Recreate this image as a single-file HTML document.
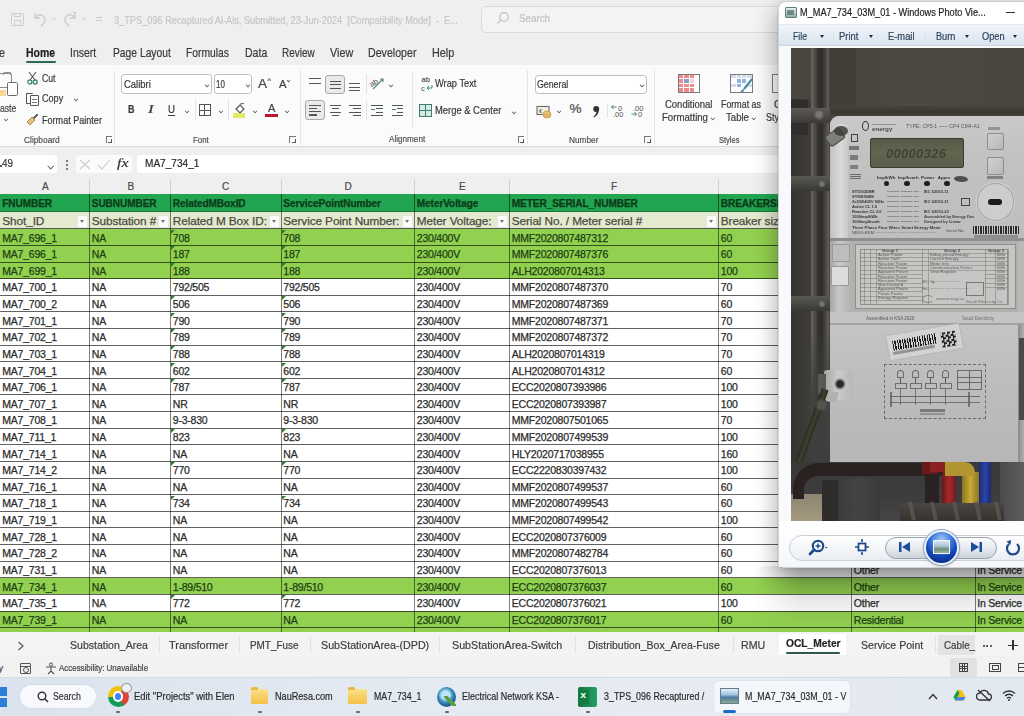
<!DOCTYPE html><html><head><meta charset="utf-8"><style>*{margin:0;padding:0;box-sizing:border-box}html,body{width:1024px;height:716px;overflow:hidden;background:#efefef;font-family:"Liberation Sans",sans-serif;position:relative}</style></head><body><div style="position:absolute;left:0.00px;top:0.00px;width:1024.00px;height:65.00px;background:#efefef"></div><div style="position:absolute;left:11.00px;top:13.00px;width:13.00px;height:13.00px;border:1.3px solid #cdcdcd;border-radius:1.5px"></div><div style="position:absolute;left:14.00px;top:13.00px;width:7.00px;height:4.00px;border:1.2px solid #cdcdcd;border-top:none"></div><div style="position:absolute;left:14.00px;top:20.00px;width:7.00px;height:6.00px;border:1.2px solid #cdcdcd;border-bottom:none"></div><svg style="position:absolute;left:32px;top:11px" width="16" height="16" viewBox="0 0 16 16"><path d="M3 2v5h5M3.5 6.5C5 4 8 3 10.5 4.5S14 9 12 12l-3 3" fill="none" stroke="#cbcbcb" stroke-width="1.4"/></svg><div style="position:absolute;left:51.5px;top:16.0px;width:3.5px;height:3.5px;border-right:1.2px solid #cfcfcf;border-bottom:1.2px solid #cfcfcf;transform:rotate(45deg) scale(0.8);transform-origin:50% 50%"></div><svg style="position:absolute;left:62px;top:11px" width="16" height="16" viewBox="0 0 16 16"><path d="M13 2v5H8M12.5 6.5C11 4 8 3 5.5 4.5S2 9 4 12l3 3" fill="none" stroke="#cbcbcb" stroke-width="1.4"/><path d="M11 1l3 1" stroke="#cbcbcb"/></svg><div style="position:absolute;left:81.5px;top:16.0px;width:3.5px;height:3.5px;border-right:1.2px solid #cfcfcf;border-bottom:1.2px solid #cfcfcf;transform:rotate(45deg) scale(0.8);transform-origin:50% 50%"></div><div style="position:absolute;left:96.00px;top:17.00px;width:6.00px;height:1.20px;background:#cbcbcb"></div><div style="position:absolute;left:96.00px;top:20.00px;width:6.00px;height:1.20px;background:#cbcbcb"></div><div style="position:absolute;left:114.20px;top:14.80px;font-family:'Liberation Sans',sans-serif;font-size:10.60px;line-height:1;white-space:nowrap;color:#c6c6c6;-webkit-text-stroke:0.2px currentColor;transform:scaleX(0.869);transform-origin:0 0;">3_TPS_096 Recaptured Al-Ais, Submitted, 23-Jun-2024 &nbsp;[Compatibility Mode] &nbsp;- &nbsp;E...</div><div style="position:absolute;left:480.50px;top:6.00px;width:309.50px;height:27.00px;background:#f3f3f3;border:1px solid #dadada;border-radius:5px"></div><svg style="position:absolute;left:496px;top:11px" width="14" height="14" viewBox="0 0 14 14"><circle cx="8" cy="6" r="4.3" fill="none" stroke="#c4c4c4" stroke-width="1.3"/><path d="M5 9L1.5 12.5" stroke="#c4c4c4" stroke-width="1.4"/></svg><div style="position:absolute;left:519.00px;top:13.24px;font-family:'Liberation Sans',sans-serif;font-size:11.00px;line-height:1;white-space:nowrap;color:#c0c0c0;-webkit-text-stroke:0.2px currentColor;transform:scaleX(0.889);transform-origin:0 0;">Search</div><div style="position:absolute;left:-1.00px;top:47.05px;font-family:'Liberation Sans',sans-serif;font-size:12.20px;line-height:1;white-space:nowrap;color:#3a3a3a;-webkit-text-stroke:0.2px currentColor;transform:scaleX(0.884);transform-origin:0 0;">e</div><div style="position:absolute;left:26.20px;top:47.05px;font-family:'Liberation Sans',sans-serif;font-size:12.20px;line-height:1;white-space:nowrap;color:#1f1f1f;-webkit-text-stroke:0.2px currentColor;font-weight:bold;transform:scaleX(0.859);transform-origin:0 0;">Home</div><div style="position:absolute;left:69.80px;top:47.05px;font-family:'Liberation Sans',sans-serif;font-size:12.20px;line-height:1;white-space:nowrap;color:#3a3a3a;-webkit-text-stroke:0.2px currentColor;transform:scaleX(0.859);transform-origin:0 0;">Insert</div><div style="position:absolute;left:112.50px;top:47.05px;font-family:'Liberation Sans',sans-serif;font-size:12.20px;line-height:1;white-space:nowrap;color:#3a3a3a;-webkit-text-stroke:0.2px currentColor;transform:scaleX(0.845);transform-origin:0 0;">Page Layout</div><div style="position:absolute;left:186.30px;top:47.05px;font-family:'Liberation Sans',sans-serif;font-size:12.20px;line-height:1;white-space:nowrap;color:#3a3a3a;-webkit-text-stroke:0.2px currentColor;transform:scaleX(0.844);transform-origin:0 0;">Formulas</div><div style="position:absolute;left:244.50px;top:47.05px;font-family:'Liberation Sans',sans-serif;font-size:12.20px;line-height:1;white-space:nowrap;color:#3a3a3a;-webkit-text-stroke:0.2px currentColor;transform:scaleX(0.865);transform-origin:0 0;">Data</div><div style="position:absolute;left:282.00px;top:47.05px;font-family:'Liberation Sans',sans-serif;font-size:12.20px;line-height:1;white-space:nowrap;color:#3a3a3a;-webkit-text-stroke:0.2px currentColor;transform:scaleX(0.820);transform-origin:0 0;">Review</div><div style="position:absolute;left:330.30px;top:47.05px;font-family:'Liberation Sans',sans-serif;font-size:12.20px;line-height:1;white-space:nowrap;color:#3a3a3a;-webkit-text-stroke:0.2px currentColor;transform:scaleX(0.885);transform-origin:0 0;">View</div><div style="position:absolute;left:368.30px;top:47.05px;font-family:'Liberation Sans',sans-serif;font-size:12.20px;line-height:1;white-space:nowrap;color:#3a3a3a;-webkit-text-stroke:0.2px currentColor;transform:scaleX(0.872);transform-origin:0 0;">Developer</div><div style="position:absolute;left:432.00px;top:47.05px;font-family:'Liberation Sans',sans-serif;font-size:12.20px;line-height:1;white-space:nowrap;color:#3a3a3a;-webkit-text-stroke:0.2px currentColor;transform:scaleX(0.889);transform-origin:0 0;">Help</div><div style="position:absolute;left:26.00px;top:61.30px;width:30.00px;height:2.20px;background:#2b6b52;border-radius:1px"></div><div style="position:absolute;left:0.00px;top:65.00px;width:1024.00px;height:82.00px;background:#fbfbfb;border-bottom:1px solid #d9d9d9;box-shadow:0 1px 1px rgba(0,0,0,0.05)"></div><div style="position:absolute;left:114.40px;top:70.00px;width:1.00px;height:75.00px;background:#e6e6e6"></div><div style="position:absolute;left:299.50px;top:70.00px;width:1.00px;height:75.00px;background:#e6e6e6"></div><div style="position:absolute;left:526.80px;top:70.00px;width:1.00px;height:75.00px;background:#e6e6e6"></div><div style="position:absolute;left:653.50px;top:70.00px;width:1.00px;height:75.00px;background:#e6e6e6"></div><div style="position:absolute;left:-3.00px;top:73.00px;width:15.00px;height:15.00px;border:1.2px solid #8a8a8a;border-radius:2px;border-left:none"></div><div style="position:absolute;left:0.00px;top:90.00px;width:6.00px;height:6.00px;background:#f2d27a;opacity:.8"></div><div style="position:absolute;left:6.50px;top:82.00px;width:11.10px;height:14.30px;background:#fff;border:1.4px solid #6a6a6a;border-radius:1.5px"></div><div style="position:absolute;left:3.00px;top:72.00px;width:8.00px;height:3.00px;border:1.2px solid #8a8a8a;border-bottom:none;border-radius:2px 2px 0 0"></div><div style="position:absolute;left:-0.50px;top:102.82px;font-family:'Liberation Sans',sans-serif;font-size:10.50px;line-height:1;white-space:nowrap;color:#444;-webkit-text-stroke:0.2px currentColor;transform:scaleX(0.821);transform-origin:0 0;">aste</div><div style="position:absolute;left:3.5px;top:117.0px;width:4px;height:4px;border-right:1.2px solid #555;border-bottom:1.2px solid #555;transform:rotate(45deg) scale(0.8);transform-origin:50% 50%"></div><svg style="position:absolute;left:27px;top:71px" width="11" height="14" viewBox="0 0 11 14"><path d="M2 1l6 8M9 1L3 9" stroke="#555" stroke-width="1.1" fill="none"/><circle cx="2.8" cy="11" r="2" fill="none" stroke="#3d8a78" stroke-width="1.3"/><circle cx="8.2" cy="11" r="2" fill="none" stroke="#3d8a78" stroke-width="1.3"/></svg><div style="position:absolute;left:41.60px;top:73.70px;font-family:'Liberation Sans',sans-serif;font-size:10.00px;line-height:1;white-space:nowrap;color:#3a3a3a;-webkit-text-stroke:0.2px currentColor;transform:scaleX(0.868);transform-origin:0 0;">Cut</div><div style="position:absolute;left:26.00px;top:92.50px;width:7.00px;height:11.50px;border:1.2px solid #555;border-radius:1px;border-right:none"></div><div style="position:absolute;left:30.00px;top:95.00px;width:8.50px;height:10.50px;background:#fbfbfb;border:1.2px solid #555;border-radius:1px"></div><div style="position:absolute;left:32.00px;top:99.00px;width:4.50px;height:1.00px;background:#777"></div><div style="position:absolute;left:32.00px;top:101.50px;width:4.50px;height:1.00px;background:#777"></div><div style="position:absolute;left:41.60px;top:94.40px;font-family:'Liberation Sans',sans-serif;font-size:10.00px;line-height:1;white-space:nowrap;color:#3a3a3a;-webkit-text-stroke:0.2px currentColor;transform:scaleX(0.908);transform-origin:0 0;">Copy</div><div style="position:absolute;left:73.5px;top:97.0px;width:4px;height:4px;border-right:1.2px solid #555;border-bottom:1.2px solid #555;transform:rotate(45deg) scale(0.8);transform-origin:50% 50%"></div><svg style="position:absolute;left:26px;top:113px" width="13" height="13" viewBox="0 0 13 13"><path d="M1 9l5-5 3 3-5 5z" fill="#e9c27a" stroke="#9a7a4a" stroke-width="0.8"/><path d="M7 5l4-4 1 1-4 4" fill="#666" stroke="#555" stroke-width="0.8"/></svg><div style="position:absolute;left:41.60px;top:116.00px;font-family:'Liberation Sans',sans-serif;font-size:10.00px;line-height:1;white-space:nowrap;color:#3a3a3a;-webkit-text-stroke:0.2px currentColor;transform:scaleX(0.906);transform-origin:0 0;">Format Painter</div><div style="position:absolute;left:24.00px;top:134.50px;font-family:'Liberation Sans',sans-serif;font-size:9.40px;line-height:1;white-space:nowrap;color:#505050;-webkit-text-stroke:0.2px currentColor;transform:scaleX(0.890);transform-origin:0 0;">Clipboard</div><div style="position:absolute;left:105.60px;top:136.00px;width:6.50px;height:6.50px;border-left:1px solid #777;border-top:1px solid #777"></div><div style="position:absolute;left:108.1px;top:138.5px;width:4px;height:4px;border-right:1.2px solid #555;border-bottom:1.2px solid #555"></div><div style="position:absolute;left:121.30px;top:74.20px;width:90.30px;height:19.50px;background:#fff;border:1px solid #bdbdbd;border-radius:3.5px"></div><div style="position:absolute;left:123.50px;top:79.57px;font-family:'Liberation Sans',sans-serif;font-size:10.20px;line-height:1;white-space:nowrap;color:#3a3a3a;-webkit-text-stroke:0.2px currentColor;transform:scaleX(0.931);transform-origin:0 0;">Calibri</div><div style="position:absolute;left:204.5px;top:82.5px;width:4px;height:4px;border-right:1.2px solid #444;border-bottom:1.2px solid #444;transform:rotate(45deg) scale(0.8);transform-origin:50% 50%"></div><div style="position:absolute;left:214.00px;top:74.20px;width:38.00px;height:19.50px;background:#fff;border:1px solid #bdbdbd;border-radius:3.5px"></div><div style="position:absolute;left:216.30px;top:79.57px;font-family:'Liberation Sans',sans-serif;font-size:10.20px;line-height:1;white-space:nowrap;color:#3a3a3a;-webkit-text-stroke:0.2px currentColor;transform:scaleX(0.784);transform-origin:0 0;">10</div><div style="position:absolute;left:246.0px;top:82.5px;width:4px;height:4px;border-right:1.2px solid #444;border-bottom:1.2px solid #444;transform:rotate(45deg) scale(0.8);transform-origin:50% 50%"></div><div style="position:absolute;left:257.70px;top:76.92px;font-family:'Liberation Sans',sans-serif;font-size:13.00px;line-height:1;white-space:nowrap;color:#444;-webkit-text-stroke:0.2px currentColor;transform:scaleX(1.038);transform-origin:0 0;">A</div><div style="position:absolute;left:267.50px;top:77.38px;font-family:'Liberation Sans',sans-serif;font-size:7.00px;line-height:1;white-space:nowrap;color:#444;-webkit-text-stroke:0.2px currentColor;">^</div><div style="position:absolute;left:279.00px;top:79.24px;font-family:'Liberation Sans',sans-serif;font-size:11.00px;line-height:1;white-space:nowrap;color:#444;-webkit-text-stroke:0.2px currentColor;transform:scaleX(1.022);transform-origin:0 0;">A</div><div style="position:absolute;left:286.5px;top:79.0px;width:3px;height:3px;border-right:1.2px solid #444;border-bottom:1.2px solid #444;transform:rotate(45deg) scale(0.8);transform-origin:50% 50%"></div><div style="position:absolute;left:127.80px;top:104.16px;font-family:'Liberation Sans',sans-serif;font-size:11.50px;line-height:1;white-space:nowrap;color:#3a3a3a;-webkit-text-stroke:0.2px currentColor;font-weight:bold;transform:scaleX(0.783);transform-origin:0 0;">B</div><div style="position:absolute;left:148.20px;top:104.16px;font-family:'Liberation Serif',serif;font-size:11.50px;line-height:1;white-space:nowrap;color:#3a3a3a;-webkit-text-stroke:0.2px currentColor;font-style:italic;transform:scaleX(1.462);transform-origin:0 0;">I</div><div style="position:absolute;left:167.70px;top:104.16px;font-family:'Liberation Sans',sans-serif;font-size:11.50px;line-height:1;white-space:nowrap;color:#3a3a3a;-webkit-text-stroke:0.2px currentColor;transform:scaleX(0.843);transform-origin:0 0;">U</div><div style="position:absolute;left:167.50px;top:115.00px;width:7.50px;height:1.00px;background:#444"></div><div style="position:absolute;left:184.5px;top:109.0px;width:4px;height:4px;border-right:1.2px solid #555;border-bottom:1.2px solid #555;transform:rotate(45deg) scale(0.8);transform-origin:50% 50%"></div><div style="position:absolute;left:194.60px;top:100.00px;width:1.00px;height:20.00px;background:#e2e2e2"></div><div style="position:absolute;left:199.20px;top:104.00px;width:11.50px;height:12.00px;border:1.2px solid #555;background:linear-gradient(#555,#555) 50% 0/1px 100% no-repeat,linear-gradient(#555,#555) 0 50%/100% 1px no-repeat"></div><div style="position:absolute;left:218.5px;top:109.0px;width:4px;height:4px;border-right:1.2px solid #555;border-bottom:1.2px solid #555;transform:rotate(45deg) scale(0.8);transform-origin:50% 50%"></div><div style="position:absolute;left:228.00px;top:100.00px;width:1.00px;height:20.00px;background:#e2e2e2"></div><svg style="position:absolute;left:234px;top:103px" width="12" height="11" viewBox="0 0 12 11"><path d="M2 6l4-4 4 4-4 4z" fill="none" stroke="#555" stroke-width="1.2"/><path d="M6 1l4-0.5" stroke="#555" stroke-width="1"/></svg><div style="position:absolute;left:232.60px;top:113.20px;width:12.10px;height:4.60px;background:#dfe96a"></div><div style="position:absolute;left:252.5px;top:109.0px;width:4px;height:4px;border-right:1.2px solid #555;border-bottom:1.2px solid #555;transform:rotate(45deg) scale(0.8);transform-origin:50% 50%"></div><div style="position:absolute;left:267.90px;top:103.27px;font-family:'Liberation Sans',sans-serif;font-size:10.80px;line-height:1;white-space:nowrap;color:#444;-webkit-text-stroke:0.2px currentColor;transform:scaleX(1.027);transform-origin:0 0;">A</div><div style="position:absolute;left:265.00px;top:114.10px;width:12.70px;height:3.30px;background:#c0182a"></div><div style="position:absolute;left:285.0px;top:109.0px;width:4px;height:4px;border-right:1.2px solid #555;border-bottom:1.2px solid #555;transform:rotate(45deg) scale(0.8);transform-origin:50% 50%"></div><div style="position:absolute;left:192.70px;top:134.90px;font-family:'Liberation Sans',sans-serif;font-size:9.40px;line-height:1;white-space:nowrap;color:#505050;-webkit-text-stroke:0.2px currentColor;transform:scaleX(0.840);transform-origin:0 0;">Font</div><div style="position:absolute;left:289.20px;top:136.40px;width:6.50px;height:6.50px;border-left:1px solid #777;border-top:1px solid #777"></div><div style="position:absolute;left:291.7px;top:138.9px;width:4px;height:4px;border-right:1.2px solid #555;border-bottom:1.2px solid #555"></div><div style="position:absolute;left:308.90px;top:78.00px;width:11.70px;height:1.20px;background:#555"></div><div style="position:absolute;left:308.90px;top:83.00px;width:11.70px;height:1.20px;background:#555"></div><div style="position:absolute;left:325.30px;top:74.50px;width:19.40px;height:19.50px;background:#e9e9e9;border:1px solid #a9a9a9;border-radius:3px"></div><div style="position:absolute;left:329.50px;top:80.50px;width:11.00px;height:1.20px;background:#555"></div><div style="position:absolute;left:329.50px;top:84.00px;width:11.00px;height:1.20px;background:#555"></div><div style="position:absolute;left:329.50px;top:87.50px;width:11.00px;height:1.20px;background:#555"></div><div style="position:absolute;left:348.70px;top:83.00px;width:11.70px;height:1.20px;background:#555"></div><div style="position:absolute;left:348.70px;top:86.50px;width:11.70px;height:1.20px;background:#555"></div><div style="position:absolute;left:348.70px;top:90.00px;width:11.70px;height:1.20px;background:#555"></div><div style="position:absolute;left:366.30px;top:74.00px;width:1.00px;height:20.00px;background:#e2e2e2"></div><svg style="position:absolute;left:370px;top:76px" width="15" height="14" viewBox="0 0 15 14"><text x="0" y="9" font-size="8" font-family="Liberation Sans" fill="#555" transform="rotate(-30 5 8)">ab</text><path d="M3 13L13 3M10 3h3v3" stroke="#5a8a7a" stroke-width="1.2" fill="none"/></svg><div style="position:absolute;left:388.5px;top:83.0px;width:4px;height:4px;border-right:1.2px solid #555;border-bottom:1.2px solid #555;transform:rotate(45deg) scale(0.8);transform-origin:50% 50%"></div><div style="position:absolute;left:412.00px;top:72.00px;width:1.00px;height:56.00px;background:#e6e6e6"></div><div style="position:absolute;left:421.50px;top:76.30px;font-family:'Liberation Sans',sans-serif;font-size:7.50px;line-height:1;white-space:nowrap;color:#555;-webkit-text-stroke:0.2px currentColor;">ab</div><svg style="position:absolute;left:421px;top:84px" width="12" height="8" viewBox="0 0 12 8"><text x="0" y="7" font-size="7.5" font-family="Liberation Sans" fill="#555">c</text><path d="M11 1v3H6M8 2L6 4l2 2" stroke="#3d8a78" stroke-width="1" fill="none"/></svg><div style="position:absolute;left:435.40px;top:79.37px;font-family:'Liberation Sans',sans-serif;font-size:10.20px;line-height:1;white-space:nowrap;color:#3a3a3a;-webkit-text-stroke:0.2px currentColor;transform:scaleX(0.911);transform-origin:0 0;">Wrap Text</div><div style="position:absolute;left:305.40px;top:100.30px;width:19.20px;height:19.90px;background:#e9e9e9;border:1px solid #a9a9a9;border-radius:3px"></div><div style="position:absolute;left:309.00px;top:104.50px;width:11.50px;height:1.20px;background:#555"></div><div style="position:absolute;left:309.00px;top:107.80px;width:8.05px;height:1.20px;background:#555"></div><div style="position:absolute;left:309.00px;top:111.10px;width:11.50px;height:1.20px;background:#555"></div><div style="position:absolute;left:309.00px;top:114.40px;width:8.05px;height:1.20px;background:#555"></div><div style="position:absolute;left:330.00px;top:105.00px;width:10.50px;height:1.20px;background:#555"></div><div style="position:absolute;left:331.57px;top:108.30px;width:7.35px;height:1.20px;background:#555"></div><div style="position:absolute;left:330.00px;top:111.60px;width:10.50px;height:1.20px;background:#555"></div><div style="position:absolute;left:331.57px;top:114.90px;width:7.35px;height:1.20px;background:#555"></div><div style="position:absolute;left:349.40px;top:105.00px;width:11.80px;height:1.20px;background:#555"></div><div style="position:absolute;left:352.94px;top:108.30px;width:8.26px;height:1.20px;background:#555"></div><div style="position:absolute;left:349.40px;top:111.60px;width:11.80px;height:1.20px;background:#555"></div><div style="position:absolute;left:352.94px;top:114.90px;width:8.26px;height:1.20px;background:#555"></div><div style="position:absolute;left:366.30px;top:100.00px;width:1.00px;height:20.00px;background:#e2e2e2"></div><div style="position:absolute;left:371.00px;top:105.00px;width:12.20px;height:1.20px;background:#555"></div><div style="position:absolute;left:376.49px;top:108.30px;width:6.71px;height:1.20px;background:#555"></div><div style="position:absolute;left:376.49px;top:111.60px;width:6.71px;height:1.20px;background:#555"></div><div style="position:absolute;left:371.00px;top:114.90px;width:12.20px;height:1.20px;background:#555"></div><div style="position:absolute;left:371.00px;top:108.50px;width:4.00px;height:1.50px;background:#3d8a78"></div><div style="position:absolute;left:391.60px;top:105.00px;width:11.70px;height:1.20px;background:#555"></div><div style="position:absolute;left:396.87px;top:108.30px;width:6.44px;height:1.20px;background:#555"></div><div style="position:absolute;left:396.87px;top:111.60px;width:6.44px;height:1.20px;background:#555"></div><div style="position:absolute;left:391.60px;top:114.90px;width:11.70px;height:1.20px;background:#555"></div><div style="position:absolute;left:391.60px;top:108.50px;width:4.00px;height:1.50px;background:#3d8a78"></div><div style="position:absolute;left:419.00px;top:103.80px;width:12.90px;height:12.90px;border:1.2px solid #3d7f6e;background:#d6ebe4"></div><div style="position:absolute;left:419.00px;top:110.00px;width:13.00px;height:1.00px;background:#3d7f6e"></div><div style="position:absolute;left:425.00px;top:104.00px;width:1.00px;height:13.00px;background:#3d7f6e"></div><div style="position:absolute;left:435.40px;top:105.97px;font-family:'Liberation Sans',sans-serif;font-size:10.20px;line-height:1;white-space:nowrap;color:#3a3a3a;-webkit-text-stroke:0.2px currentColor;transform:scaleX(0.922);transform-origin:0 0;">Merge &amp; Center</div><div style="position:absolute;left:512.0px;top:110.0px;width:4px;height:4px;border-right:1.2px solid #555;border-bottom:1.2px solid #555;transform:rotate(45deg) scale(0.8);transform-origin:50% 50%"></div><div style="position:absolute;left:388.60px;top:134.20px;font-family:'Liberation Sans',sans-serif;font-size:9.40px;line-height:1;white-space:nowrap;color:#505050;-webkit-text-stroke:0.2px currentColor;transform:scaleX(0.868);transform-origin:0 0;">Alignment</div><div style="position:absolute;left:517.50px;top:136.00px;width:6.50px;height:6.50px;border-left:1px solid #777;border-top:1px solid #777"></div><div style="position:absolute;left:520.0px;top:138.5px;width:4px;height:4px;border-right:1.2px solid #555;border-bottom:1.2px solid #555"></div><div style="position:absolute;left:534.50px;top:74.50px;width:112.80px;height:19.00px;background:#fff;border:1px solid #bdbdbd;border-radius:3.5px"></div><div style="position:absolute;left:536.50px;top:79.57px;font-family:'Liberation Sans',sans-serif;font-size:10.20px;line-height:1;white-space:nowrap;color:#3a3a3a;-webkit-text-stroke:0.2px currentColor;transform:scaleX(0.863);transform-origin:0 0;">General</div><div style="position:absolute;left:639.5px;top:82.5px;width:4px;height:4px;border-right:1.2px solid #444;border-bottom:1.2px solid #444;transform:rotate(45deg) scale(0.8);transform-origin:50% 50%"></div><svg style="position:absolute;left:536px;top:105px" width="16" height="14" viewBox="0 0 16 14"><rect x="1" y="1.5" width="12" height="8" fill="#f4f0e4" stroke="#6a6a6a" stroke-width="1.1"/><text x="3" y="8" font-size="6" font-family="Liberation Sans" fill="#555">€</text><ellipse cx="11" cy="9.5" rx="4" ry="3.5" fill="#eccb7a" stroke="#b89040" stroke-width="0.8"/><path d="M8 9h6M8 11h6" stroke="#b89040" stroke-width="0.6"/></svg><div style="position:absolute;left:556.5px;top:109.0px;width:4px;height:4px;border-right:1.2px solid #555;border-bottom:1.2px solid #555;transform:rotate(45deg) scale(0.8);transform-origin:50% 50%"></div><div style="position:absolute;left:569.50px;top:102.34px;font-family:'Liberation Sans',sans-serif;font-size:13.50px;line-height:1;white-space:nowrap;color:#4a4a4a;-webkit-text-stroke:0.2px currentColor;">%</div><svg style="position:absolute;left:592px;top:105px" width="8" height="13" viewBox="0 0 8 13"><circle cx="4.2" cy="4" r="3" fill="#333"/><path d="M6.8 4.5C7 8 5 11 2 12.5L1.5 11.5C3.5 10 4.5 8 4.5 6z" fill="#333"/></svg><div style="position:absolute;left:606.50px;top:104.00px;width:1.00px;height:14.00px;background:#e2e2e2"></div><svg style="position:absolute;left:610px;top:103px" width="16" height="15" viewBox="0 0 16 15"><path d="M1.5 4h5M3.5 2L1.5 4l2 2" stroke="#4d8a78" stroke-width="1" fill="none"/><text x="8" y="7.5" font-size="7.5" font-family="Liberation Sans" fill="#555">0</text><text x="3" y="14" font-size="7.5" font-family="Liberation Sans" fill="#555">.00</text></svg><svg style="position:absolute;left:630px;top:103px" width="16" height="15" viewBox="0 0 16 15"><text x="3" y="7.5" font-size="7.5" font-family="Liberation Sans" fill="#555">.00</text><path d="M1.5 11h5M4.5 9l2 2-2 2" stroke="#4d8a78" stroke-width="1" fill="none"/><text x="8" y="14" font-size="7.5" font-family="Liberation Sans" fill="#555">0</text></svg><div style="position:absolute;left:569.00px;top:134.50px;font-family:'Liberation Sans',sans-serif;font-size:9.40px;line-height:1;white-space:nowrap;color:#505050;-webkit-text-stroke:0.2px currentColor;transform:scaleX(0.882);transform-origin:0 0;">Number</div><div style="position:absolute;left:644.00px;top:136.00px;width:6.50px;height:6.50px;border-left:1px solid #777;border-top:1px solid #777"></div><div style="position:absolute;left:646.5px;top:138.5px;width:4px;height:4px;border-right:1.2px solid #555;border-bottom:1.2px solid #555"></div><div style="position:absolute;left:677.8px;top:74px;width:22.5px;height:18.8px;border:1px solid #7a7a7a;background:#fff;display:grid;grid-template-columns:repeat(4,1fr);grid-template-rows:repeat(4,1fr);gap:1px"><div style="background:#f08a8a"></div><div style="background:#f08a8a"></div><div style="background:#f08a8a"></div><div style="background:#fff"></div><div style="background:#f08a8a"></div><div style="background:#8aa0c0"></div><div style="background:#f6d0d0"></div><div style="background:#fff"></div><div style="background:#f08a8a"></div><div style="background:#f08a8a"></div><div style="background:#f08a8a"></div><div style="background:#fff"></div><div style="background:#f08a8a"></div><div style="background:#f08a8a"></div><div style="background:#f08a8a"></div><div style="background:#fff"></div></div><div style="position:absolute;left:664.50px;top:100.07px;font-family:'Liberation Sans',sans-serif;font-size:10.20px;line-height:1;white-space:nowrap;color:#3a3a3a;-webkit-text-stroke:0.2px currentColor;transform:scaleX(0.931);transform-origin:0 0;">Conditional</div><div style="position:absolute;left:661.50px;top:112.57px;font-family:'Liberation Sans',sans-serif;font-size:10.20px;line-height:1;white-space:nowrap;color:#3a3a3a;-webkit-text-stroke:0.2px currentColor;transform:scaleX(0.944);transform-origin:0 0;">Formatting</div><div style="position:absolute;left:711.0px;top:116.0px;width:3.5px;height:3.5px;border-right:1.2px solid #555;border-bottom:1.2px solid #555;transform:rotate(45deg) scale(0.8);transform-origin:50% 50%"></div><div style="position:absolute;left:730.3px;top:74px;width:22.5px;height:18.8px;border:1px solid #7a7a7a;background:#fff;display:grid;grid-template-columns:repeat(4,1fr);grid-template-rows:repeat(4,1fr);gap:1px"><div style="background:#cfdcec"></div><div style="background:#cfdcec"></div><div style="background:#cfdcec"></div><div style="background:#cfdcec"></div><div style="background:#fff"></div><div style="background:#8fb3dd"></div><div style="background:#8fb3dd"></div><div style="background:#fff"></div><div style="background:#cfdcec"></div><div style="background:#8fb3dd"></div><div style="background:#fff"></div><div style="background:#cfdcec"></div><div style="background:#fff"></div><div style="background:#fff"></div><div style="background:#fff"></div><div style="background:#fff"></div></div><svg style="position:absolute;left:738px;top:78px" width="16" height="16" viewBox="0 0 16 16"><path d="M14 1L6 11" stroke="#4a8a9a" stroke-width="2.2"/><path d="M6 11c-2 0-3 2-4 4 2 0 4-1 4-4z" fill="#4a8a9a"/></svg><div style="position:absolute;left:721.00px;top:100.07px;font-family:'Liberation Sans',sans-serif;font-size:10.20px;line-height:1;white-space:nowrap;color:#3a3a3a;-webkit-text-stroke:0.2px currentColor;transform:scaleX(0.871);transform-origin:0 0;">Format as</div><div style="position:absolute;left:726.00px;top:112.57px;font-family:'Liberation Sans',sans-serif;font-size:10.20px;line-height:1;white-space:nowrap;color:#3a3a3a;-webkit-text-stroke:0.2px currentColor;transform:scaleX(0.943);transform-origin:0 0;">Table</div><div style="position:absolute;left:752.0px;top:116.0px;width:3.5px;height:3.5px;border-right:1.2px solid #555;border-bottom:1.2px solid #555;transform:rotate(45deg) scale(0.8);transform-origin:50% 50%"></div><div style="position:absolute;left:771.50px;top:74.00px;width:10.50px;height:19.00px;border:1px solid #7a7a7a;background:linear-gradient(90deg,transparent 45%,#7a7a7a 45% 55%,transparent 55%)"></div><div style="position:absolute;left:774.00px;top:100.07px;font-family:'Liberation Sans',sans-serif;font-size:10.20px;line-height:1;white-space:nowrap;color:#3a3a3a;-webkit-text-stroke:0.2px currentColor;">C</div><div style="position:absolute;left:766.00px;top:112.57px;font-family:'Liberation Sans',sans-serif;font-size:10.20px;line-height:1;white-space:nowrap;color:#3a3a3a;-webkit-text-stroke:0.2px currentColor;transform:scaleX(0.882);transform-origin:0 0;">Sty</div><div style="position:absolute;left:719.00px;top:135.00px;font-family:'Liberation Sans',sans-serif;font-size:9.40px;line-height:1;white-space:nowrap;color:#505050;-webkit-text-stroke:0.2px currentColor;transform:scaleX(0.801);transform-origin:0 0;">Styles</div><div style="position:absolute;left:0.00px;top:147.00px;width:1024.00px;height:31.00px;background:#efefef"></div><div style="position:absolute;left:-5.00px;top:154.50px;width:62.40px;height:18.10px;background:#fff;border-radius:3px"></div><div style="position:absolute;left:0.00px;top:165.00px;width:1.50px;height:2.00px;background:#555"></div><div style="position:absolute;left:1.50px;top:159.35px;font-family:'Liberation Sans',sans-serif;font-size:10.30px;line-height:1;white-space:nowrap;color:#3a3a3a;-webkit-text-stroke:0.2px currentColor;transform:scaleX(0.960);transform-origin:0 0;">49</div><div style="position:absolute;left:48.0px;top:162.5px;width:5.5px;height:5.5px;border-right:1.2px solid #555;border-bottom:1.2px solid #555;transform:rotate(45deg) scale(0.8);transform-origin:50% 50%"></div><div style="position:absolute;left:65.50px;top:160.00px;width:2.00px;height:2.00px;background:#555;border-radius:1px"></div><div style="position:absolute;left:65.50px;top:163.80px;width:2.00px;height:2.00px;background:#555;border-radius:1px"></div><div style="position:absolute;left:65.50px;top:167.60px;width:2.00px;height:2.00px;background:#555;border-radius:1px"></div><div style="position:absolute;left:76.20px;top:154.50px;width:56.20px;height:18.10px;background:#fbfbfb;border-radius:3px"></div><svg style="position:absolute;left:79px;top:159px" width="12" height="11" viewBox="0 0 12 11"><path d="M1 1l10 9M11 1L1 10" stroke="#cbcbcb" stroke-width="1.1"/></svg><svg style="position:absolute;left:97px;top:159px" width="14" height="11" viewBox="0 0 14 11"><path d="M1 6l4 4 8-9" stroke="#cbcbcb" stroke-width="1.1" fill="none"/></svg><div style="position:absolute;left:117.20px;top:157.08px;font-family:'Liberation Serif',serif;font-size:12.00px;line-height:1;white-space:nowrap;color:#333;-webkit-text-stroke:0.2px currentColor;font-style:italic;transform:scaleX(1.328);transform-origin:0 0;">fx</div><div style="position:absolute;left:137.10px;top:154.50px;width:886.90px;height:18.10px;background:#fff;border-radius:3px"></div><div style="position:absolute;left:145.30px;top:159.35px;font-family:'Liberation Sans',sans-serif;font-size:10.30px;line-height:1;white-space:nowrap;color:#2a2a2a;-webkit-text-stroke:0.2px currentColor;transform:scaleX(0.979);transform-origin:0 0;">MA7_734_1</div><div style="position:absolute;left:0.00px;top:178.00px;width:1024.00px;height:16.00px;background:#efefef"></div><div style="position:absolute;left:42.00px;top:182.20px;font-family:'Liberation Sans',sans-serif;font-size:10.00px;line-height:1;white-space:nowrap;color:#4a4a4a;-webkit-text-stroke:0.2px currentColor;">A</div><div style="position:absolute;left:127.40px;top:182.20px;font-family:'Liberation Sans',sans-serif;font-size:10.00px;line-height:1;white-space:nowrap;color:#4a4a4a;-webkit-text-stroke:0.2px currentColor;">B</div><div style="position:absolute;left:222.00px;top:182.20px;font-family:'Liberation Sans',sans-serif;font-size:10.00px;line-height:1;white-space:nowrap;color:#4a4a4a;-webkit-text-stroke:0.2px currentColor;">C</div><div style="position:absolute;left:344.50px;top:182.20px;font-family:'Liberation Sans',sans-serif;font-size:10.00px;line-height:1;white-space:nowrap;color:#4a4a4a;-webkit-text-stroke:0.2px currentColor;">D</div><div style="position:absolute;left:459.00px;top:182.20px;font-family:'Liberation Sans',sans-serif;font-size:10.00px;line-height:1;white-space:nowrap;color:#4a4a4a;-webkit-text-stroke:0.2px currentColor;">E</div><div style="position:absolute;left:611.00px;top:182.20px;font-family:'Liberation Sans',sans-serif;font-size:10.00px;line-height:1;white-space:nowrap;color:#4a4a4a;-webkit-text-stroke:0.2px currentColor;">F</div><div style="position:absolute;left:89.00px;top:179.00px;width:1.00px;height:15.00px;background:#d0d0d0"></div><div style="position:absolute;left:170.00px;top:179.00px;width:1.00px;height:15.00px;background:#d0d0d0"></div><div style="position:absolute;left:280.50px;top:179.00px;width:1.00px;height:15.00px;background:#d0d0d0"></div><div style="position:absolute;left:414.00px;top:179.00px;width:1.00px;height:15.00px;background:#d0d0d0"></div><div style="position:absolute;left:509.00px;top:179.00px;width:1.00px;height:15.00px;background:#d0d0d0"></div><div style="position:absolute;left:718.00px;top:179.00px;width:1.00px;height:15.00px;background:#d0d0d0"></div><div style="position:absolute;left:0.00px;top:194.00px;width:1024.00px;height:18.00px;background:#21a550"></div><div style="position:absolute;left:0.00px;top:210.80px;width:1024.00px;height:1.40px;background:#1b7a3c"></div><div style="position:absolute;white-space:nowrap;overflow:hidden;line-height:1;font-family:'Liberation Sans',sans-serif;-webkit-text-stroke:0.25px currentColor;left:0.0px;top:199.18px;width:89.5px;height:12.6px;padding-left:2.3px;font-size:10.1px;color:#0c3a1a;letter-spacing:-0.1px;font-weight:bold;">FNUMBER</div><div style="position:absolute;white-space:nowrap;overflow:hidden;line-height:1;font-family:'Liberation Sans',sans-serif;-webkit-text-stroke:0.25px currentColor;left:89.5px;top:199.18px;width:81.0px;height:12.6px;padding-left:2.3px;font-size:10.1px;color:#0c3a1a;letter-spacing:-0.1px;font-weight:bold;">SUBNUMBER</div><div style="position:absolute;white-space:nowrap;overflow:hidden;line-height:1;font-family:'Liberation Sans',sans-serif;-webkit-text-stroke:0.25px currentColor;left:170.5px;top:199.18px;width:110.5px;height:12.6px;padding-left:2.3px;font-size:10.1px;color:#0c3a1a;letter-spacing:-0.1px;font-weight:bold;">RelatedMBoxID</div><div style="position:absolute;white-space:nowrap;overflow:hidden;line-height:1;font-family:'Liberation Sans',sans-serif;-webkit-text-stroke:0.25px currentColor;left:281.0px;top:199.18px;width:133.5px;height:12.6px;padding-left:2.3px;font-size:10.1px;color:#0c3a1a;letter-spacing:-0.1px;font-weight:bold;">ServicePointNumber</div><div style="position:absolute;white-space:nowrap;overflow:hidden;line-height:1;font-family:'Liberation Sans',sans-serif;-webkit-text-stroke:0.25px currentColor;left:414.5px;top:199.18px;width:95.0px;height:12.6px;padding-left:2.3px;font-size:10.1px;color:#0c3a1a;letter-spacing:-0.1px;font-weight:bold;">MeterVoltage</div><div style="position:absolute;white-space:nowrap;overflow:hidden;line-height:1;font-family:'Liberation Sans',sans-serif;-webkit-text-stroke:0.25px currentColor;left:509.5px;top:199.18px;width:209.0px;height:12.6px;padding-left:2.3px;font-size:10.1px;color:#0c3a1a;letter-spacing:-0.1px;font-weight:bold;">METER_SERIAL_NUMBER</div><div style="position:absolute;white-space:nowrap;overflow:hidden;line-height:1;font-family:'Liberation Sans',sans-serif;-webkit-text-stroke:0.25px currentColor;left:718.5px;top:199.18px;width:133.0px;height:12.6px;padding-left:2.3px;font-size:10.1px;color:#0c3a1a;letter-spacing:-0.1px;font-weight:bold;">BREAKERSIZE</div><div style="position:absolute;left:0.00px;top:212.20px;width:1024.00px;height:16.60px;background:#e3ead0"></div><div style="position:absolute;white-space:nowrap;overflow:hidden;line-height:1;font-family:'Liberation Sans',sans-serif;-webkit-text-stroke:0.25px currentColor;left:0.0px;top:215.71px;width:75.5px;height:14.8px;padding-left:2.3px;font-size:11.8px;color:#4b4b3e;letter-spacing:-0.1px;">Shot_ID</div><div style="position:absolute;left:77.00px;top:214.60px;width:11.00px;height:13.20px;background:#fbfbfb;border:1px solid #e5e5e5"></div><div style="position:absolute;left:80.0px;top:220px;width:0;height:0;border-left:2.5px solid transparent;border-right:2.5px solid transparent;border-top:3px solid #777"></div><div style="position:absolute;white-space:nowrap;overflow:hidden;line-height:1;font-family:'Liberation Sans',sans-serif;-webkit-text-stroke:0.25px currentColor;left:89.5px;top:215.71px;width:67.0px;height:14.8px;padding-left:2.3px;font-size:11.8px;color:#4b4b3e;letter-spacing:-0.1px;">Substation #</div><div style="position:absolute;left:158.00px;top:214.60px;width:11.00px;height:13.20px;background:#fbfbfb;border:1px solid #e5e5e5"></div><div style="position:absolute;left:161.0px;top:220px;width:0;height:0;border-left:2.5px solid transparent;border-right:2.5px solid transparent;border-top:3px solid #777"></div><div style="position:absolute;white-space:nowrap;overflow:hidden;line-height:1;font-family:'Liberation Sans',sans-serif;-webkit-text-stroke:0.25px currentColor;left:170.5px;top:215.71px;width:96.5px;height:14.8px;padding-left:2.3px;font-size:11.8px;color:#4b4b3e;letter-spacing:-0.1px;">Related M Box ID:</div><div style="position:absolute;left:268.50px;top:214.60px;width:11.00px;height:13.20px;background:#fbfbfb;border:1px solid #e5e5e5"></div><div style="position:absolute;left:271.5px;top:220px;width:0;height:0;border-left:2.5px solid transparent;border-right:2.5px solid transparent;border-top:3px solid #777"></div><div style="position:absolute;white-space:nowrap;overflow:hidden;line-height:1;font-family:'Liberation Sans',sans-serif;-webkit-text-stroke:0.25px currentColor;left:281.0px;top:215.71px;width:119.5px;height:14.8px;padding-left:2.3px;font-size:11.8px;color:#4b4b3e;letter-spacing:-0.1px;">Service Point Number:</div><div style="position:absolute;left:402.00px;top:214.60px;width:11.00px;height:13.20px;background:#fbfbfb;border:1px solid #e5e5e5"></div><div style="position:absolute;left:405.0px;top:220px;width:0;height:0;border-left:2.5px solid transparent;border-right:2.5px solid transparent;border-top:3px solid #777"></div><div style="position:absolute;white-space:nowrap;overflow:hidden;line-height:1;font-family:'Liberation Sans',sans-serif;-webkit-text-stroke:0.25px currentColor;left:414.5px;top:215.71px;width:81.0px;height:14.8px;padding-left:2.3px;font-size:11.8px;color:#4b4b3e;letter-spacing:-0.1px;">Meter Voltage:</div><div style="position:absolute;left:497.00px;top:214.60px;width:11.00px;height:13.20px;background:#fbfbfb;border:1px solid #e5e5e5"></div><div style="position:absolute;left:500.0px;top:220px;width:0;height:0;border-left:2.5px solid transparent;border-right:2.5px solid transparent;border-top:3px solid #777"></div><div style="position:absolute;white-space:nowrap;overflow:hidden;line-height:1;font-family:'Liberation Sans',sans-serif;-webkit-text-stroke:0.25px currentColor;left:509.5px;top:215.71px;width:195.0px;height:14.8px;padding-left:2.3px;font-size:11.8px;color:#4b4b3e;letter-spacing:-0.1px;">Serial No. / Meter serial #</div><div style="position:absolute;left:706.00px;top:214.60px;width:11.00px;height:13.20px;background:#fbfbfb;border:1px solid #e5e5e5"></div><div style="position:absolute;left:709.0px;top:220px;width:0;height:0;border-left:2.5px solid transparent;border-right:2.5px solid transparent;border-top:3px solid #777"></div><div style="position:absolute;white-space:nowrap;overflow:hidden;line-height:1;font-family:'Liberation Sans',sans-serif;-webkit-text-stroke:0.25px currentColor;left:718.5px;top:215.71px;width:119.0px;height:14.8px;padding-left:2.3px;font-size:11.8px;color:#4b4b3e;letter-spacing:-0.1px;">Breaker size</div><div style="position:absolute;left:0.00px;top:228.80px;width:1024.00px;height:16.92px;background:#92d050"></div><div style="position:absolute;white-space:nowrap;overflow:hidden;line-height:1;font-family:'Liberation Sans',sans-serif;-webkit-text-stroke:0.25px currentColor;left:0.0px;top:232.57px;width:89.5px;height:13.1px;padding-left:2.3px;font-size:10.5px;color:#1c3f14;letter-spacing:-0.22px;">MA7_696_1</div><div style="position:absolute;white-space:nowrap;overflow:hidden;line-height:1;font-family:'Liberation Sans',sans-serif;-webkit-text-stroke:0.25px currentColor;left:89.5px;top:232.57px;width:81.0px;height:13.1px;padding-left:2.3px;font-size:10.5px;color:#1c3f14;letter-spacing:-0.22px;">NA</div><div style="position:absolute;white-space:nowrap;overflow:hidden;line-height:1;font-family:'Liberation Sans',sans-serif;-webkit-text-stroke:0.25px currentColor;left:170.5px;top:232.57px;width:110.5px;height:13.1px;padding-left:2.3px;font-size:10.5px;color:#1c3f14;letter-spacing:-0.22px;">708</div><div style="position:absolute;left:171.0px;top:229.60px;width:0;height:0;border-top:4px solid #2e7a2e;border-right:4px solid transparent"></div><div style="position:absolute;white-space:nowrap;overflow:hidden;line-height:1;font-family:'Liberation Sans',sans-serif;-webkit-text-stroke:0.25px currentColor;left:281.0px;top:232.57px;width:133.5px;height:13.1px;padding-left:2.3px;font-size:10.5px;color:#1c3f14;letter-spacing:-0.22px;">708</div><div style="position:absolute;left:281.5px;top:229.60px;width:0;height:0;border-top:4px solid #2e7a2e;border-right:4px solid transparent"></div><div style="position:absolute;white-space:nowrap;overflow:hidden;line-height:1;font-family:'Liberation Sans',sans-serif;-webkit-text-stroke:0.25px currentColor;left:414.5px;top:232.57px;width:95.0px;height:13.1px;padding-left:2.3px;font-size:10.5px;color:#1c3f14;letter-spacing:-0.22px;">230/400V</div><div style="position:absolute;white-space:nowrap;overflow:hidden;line-height:1;font-family:'Liberation Sans',sans-serif;-webkit-text-stroke:0.25px currentColor;left:509.5px;top:232.57px;width:209.0px;height:13.1px;padding-left:2.3px;font-size:10.5px;color:#1c3f14;letter-spacing:-0.22px;">MMF2020807487312</div><div style="position:absolute;white-space:nowrap;overflow:hidden;line-height:1;font-family:'Liberation Sans',sans-serif;-webkit-text-stroke:0.25px currentColor;left:718.5px;top:232.57px;width:133.0px;height:13.1px;padding-left:2.3px;font-size:10.5px;color:#1c3f14;letter-spacing:-0.22px;">60</div><div style="position:absolute;left:0.00px;top:245.42px;width:1024.00px;height:16.92px;background:#92d050"></div><div style="position:absolute;white-space:nowrap;overflow:hidden;line-height:1;font-family:'Liberation Sans',sans-serif;-webkit-text-stroke:0.25px currentColor;left:0.0px;top:249.19px;width:89.5px;height:13.1px;padding-left:2.3px;font-size:10.5px;color:#1c3f14;letter-spacing:-0.22px;">MA7_696_1</div><div style="position:absolute;white-space:nowrap;overflow:hidden;line-height:1;font-family:'Liberation Sans',sans-serif;-webkit-text-stroke:0.25px currentColor;left:89.5px;top:249.19px;width:81.0px;height:13.1px;padding-left:2.3px;font-size:10.5px;color:#1c3f14;letter-spacing:-0.22px;">NA</div><div style="position:absolute;white-space:nowrap;overflow:hidden;line-height:1;font-family:'Liberation Sans',sans-serif;-webkit-text-stroke:0.25px currentColor;left:170.5px;top:249.19px;width:110.5px;height:13.1px;padding-left:2.3px;font-size:10.5px;color:#1c3f14;letter-spacing:-0.22px;">187</div><div style="position:absolute;left:171.0px;top:246.22px;width:0;height:0;border-top:4px solid #2e7a2e;border-right:4px solid transparent"></div><div style="position:absolute;white-space:nowrap;overflow:hidden;line-height:1;font-family:'Liberation Sans',sans-serif;-webkit-text-stroke:0.25px currentColor;left:281.0px;top:249.19px;width:133.5px;height:13.1px;padding-left:2.3px;font-size:10.5px;color:#1c3f14;letter-spacing:-0.22px;">187</div><div style="position:absolute;left:281.5px;top:246.22px;width:0;height:0;border-top:4px solid #2e7a2e;border-right:4px solid transparent"></div><div style="position:absolute;white-space:nowrap;overflow:hidden;line-height:1;font-family:'Liberation Sans',sans-serif;-webkit-text-stroke:0.25px currentColor;left:414.5px;top:249.19px;width:95.0px;height:13.1px;padding-left:2.3px;font-size:10.5px;color:#1c3f14;letter-spacing:-0.22px;">230/400V</div><div style="position:absolute;white-space:nowrap;overflow:hidden;line-height:1;font-family:'Liberation Sans',sans-serif;-webkit-text-stroke:0.25px currentColor;left:509.5px;top:249.19px;width:209.0px;height:13.1px;padding-left:2.3px;font-size:10.5px;color:#1c3f14;letter-spacing:-0.22px;">MMF2020807487376</div><div style="position:absolute;white-space:nowrap;overflow:hidden;line-height:1;font-family:'Liberation Sans',sans-serif;-webkit-text-stroke:0.25px currentColor;left:718.5px;top:249.19px;width:133.0px;height:13.1px;padding-left:2.3px;font-size:10.5px;color:#1c3f14;letter-spacing:-0.22px;">60</div><div style="position:absolute;left:0.00px;top:262.04px;width:1024.00px;height:16.92px;background:#92d050"></div><div style="position:absolute;white-space:nowrap;overflow:hidden;line-height:1;font-family:'Liberation Sans',sans-serif;-webkit-text-stroke:0.25px currentColor;left:0.0px;top:265.81px;width:89.5px;height:13.1px;padding-left:2.3px;font-size:10.5px;color:#1c3f14;letter-spacing:-0.22px;">MA7_699_1</div><div style="position:absolute;white-space:nowrap;overflow:hidden;line-height:1;font-family:'Liberation Sans',sans-serif;-webkit-text-stroke:0.25px currentColor;left:89.5px;top:265.81px;width:81.0px;height:13.1px;padding-left:2.3px;font-size:10.5px;color:#1c3f14;letter-spacing:-0.22px;">NA</div><div style="position:absolute;white-space:nowrap;overflow:hidden;line-height:1;font-family:'Liberation Sans',sans-serif;-webkit-text-stroke:0.25px currentColor;left:170.5px;top:265.81px;width:110.5px;height:13.1px;padding-left:2.3px;font-size:10.5px;color:#1c3f14;letter-spacing:-0.22px;">188</div><div style="position:absolute;left:171.0px;top:262.84px;width:0;height:0;border-top:4px solid #2e7a2e;border-right:4px solid transparent"></div><div style="position:absolute;white-space:nowrap;overflow:hidden;line-height:1;font-family:'Liberation Sans',sans-serif;-webkit-text-stroke:0.25px currentColor;left:281.0px;top:265.81px;width:133.5px;height:13.1px;padding-left:2.3px;font-size:10.5px;color:#1c3f14;letter-spacing:-0.22px;">188</div><div style="position:absolute;left:281.5px;top:262.84px;width:0;height:0;border-top:4px solid #2e7a2e;border-right:4px solid transparent"></div><div style="position:absolute;white-space:nowrap;overflow:hidden;line-height:1;font-family:'Liberation Sans',sans-serif;-webkit-text-stroke:0.25px currentColor;left:414.5px;top:265.81px;width:95.0px;height:13.1px;padding-left:2.3px;font-size:10.5px;color:#1c3f14;letter-spacing:-0.22px;">230/400V</div><div style="position:absolute;white-space:nowrap;overflow:hidden;line-height:1;font-family:'Liberation Sans',sans-serif;-webkit-text-stroke:0.25px currentColor;left:509.5px;top:265.81px;width:209.0px;height:13.1px;padding-left:2.3px;font-size:10.5px;color:#1c3f14;letter-spacing:-0.22px;">ALH2020807014313</div><div style="position:absolute;white-space:nowrap;overflow:hidden;line-height:1;font-family:'Liberation Sans',sans-serif;-webkit-text-stroke:0.25px currentColor;left:718.5px;top:265.81px;width:133.0px;height:13.1px;padding-left:2.3px;font-size:10.5px;color:#1c3f14;letter-spacing:-0.22px;">100</div><div style="position:absolute;left:0.00px;top:278.66px;width:1024.00px;height:16.92px;background:#ffffff"></div><div style="position:absolute;white-space:nowrap;overflow:hidden;line-height:1;font-family:'Liberation Sans',sans-serif;-webkit-text-stroke:0.25px currentColor;left:0.0px;top:282.43px;width:89.5px;height:13.1px;padding-left:2.3px;font-size:10.5px;color:#2b2b2b;letter-spacing:-0.22px;">MA7_700_1</div><div style="position:absolute;white-space:nowrap;overflow:hidden;line-height:1;font-family:'Liberation Sans',sans-serif;-webkit-text-stroke:0.25px currentColor;left:89.5px;top:282.43px;width:81.0px;height:13.1px;padding-left:2.3px;font-size:10.5px;color:#2b2b2b;letter-spacing:-0.22px;">NA</div><div style="position:absolute;white-space:nowrap;overflow:hidden;line-height:1;font-family:'Liberation Sans',sans-serif;-webkit-text-stroke:0.25px currentColor;left:170.5px;top:282.43px;width:110.5px;height:13.1px;padding-left:2.3px;font-size:10.5px;color:#2b2b2b;letter-spacing:-0.22px;">792/505</div><div style="position:absolute;white-space:nowrap;overflow:hidden;line-height:1;font-family:'Liberation Sans',sans-serif;-webkit-text-stroke:0.25px currentColor;left:281.0px;top:282.43px;width:133.5px;height:13.1px;padding-left:2.3px;font-size:10.5px;color:#2b2b2b;letter-spacing:-0.22px;">792/505</div><div style="position:absolute;white-space:nowrap;overflow:hidden;line-height:1;font-family:'Liberation Sans',sans-serif;-webkit-text-stroke:0.25px currentColor;left:414.5px;top:282.43px;width:95.0px;height:13.1px;padding-left:2.3px;font-size:10.5px;color:#2b2b2b;letter-spacing:-0.22px;">230/400V</div><div style="position:absolute;white-space:nowrap;overflow:hidden;line-height:1;font-family:'Liberation Sans',sans-serif;-webkit-text-stroke:0.25px currentColor;left:509.5px;top:282.43px;width:209.0px;height:13.1px;padding-left:2.3px;font-size:10.5px;color:#2b2b2b;letter-spacing:-0.22px;">MMF2020807487370</div><div style="position:absolute;white-space:nowrap;overflow:hidden;line-height:1;font-family:'Liberation Sans',sans-serif;-webkit-text-stroke:0.25px currentColor;left:718.5px;top:282.43px;width:133.0px;height:13.1px;padding-left:2.3px;font-size:10.5px;color:#2b2b2b;letter-spacing:-0.22px;">70</div><div style="position:absolute;left:0.00px;top:295.28px;width:1024.00px;height:16.92px;background:#ffffff"></div><div style="position:absolute;white-space:nowrap;overflow:hidden;line-height:1;font-family:'Liberation Sans',sans-serif;-webkit-text-stroke:0.25px currentColor;left:0.0px;top:299.05px;width:89.5px;height:13.1px;padding-left:2.3px;font-size:10.5px;color:#2b2b2b;letter-spacing:-0.22px;">MA7_700_2</div><div style="position:absolute;white-space:nowrap;overflow:hidden;line-height:1;font-family:'Liberation Sans',sans-serif;-webkit-text-stroke:0.25px currentColor;left:89.5px;top:299.05px;width:81.0px;height:13.1px;padding-left:2.3px;font-size:10.5px;color:#2b2b2b;letter-spacing:-0.22px;">NA</div><div style="position:absolute;white-space:nowrap;overflow:hidden;line-height:1;font-family:'Liberation Sans',sans-serif;-webkit-text-stroke:0.25px currentColor;left:170.5px;top:299.05px;width:110.5px;height:13.1px;padding-left:2.3px;font-size:10.5px;color:#2b2b2b;letter-spacing:-0.22px;">506</div><div style="position:absolute;left:171.0px;top:296.08px;width:0;height:0;border-top:4px solid #2e7a2e;border-right:4px solid transparent"></div><div style="position:absolute;white-space:nowrap;overflow:hidden;line-height:1;font-family:'Liberation Sans',sans-serif;-webkit-text-stroke:0.25px currentColor;left:281.0px;top:299.05px;width:133.5px;height:13.1px;padding-left:2.3px;font-size:10.5px;color:#2b2b2b;letter-spacing:-0.22px;">506</div><div style="position:absolute;left:281.5px;top:296.08px;width:0;height:0;border-top:4px solid #2e7a2e;border-right:4px solid transparent"></div><div style="position:absolute;white-space:nowrap;overflow:hidden;line-height:1;font-family:'Liberation Sans',sans-serif;-webkit-text-stroke:0.25px currentColor;left:414.5px;top:299.05px;width:95.0px;height:13.1px;padding-left:2.3px;font-size:10.5px;color:#2b2b2b;letter-spacing:-0.22px;">230/400V</div><div style="position:absolute;white-space:nowrap;overflow:hidden;line-height:1;font-family:'Liberation Sans',sans-serif;-webkit-text-stroke:0.25px currentColor;left:509.5px;top:299.05px;width:209.0px;height:13.1px;padding-left:2.3px;font-size:10.5px;color:#2b2b2b;letter-spacing:-0.22px;">MMF2020807487369</div><div style="position:absolute;white-space:nowrap;overflow:hidden;line-height:1;font-family:'Liberation Sans',sans-serif;-webkit-text-stroke:0.25px currentColor;left:718.5px;top:299.05px;width:133.0px;height:13.1px;padding-left:2.3px;font-size:10.5px;color:#2b2b2b;letter-spacing:-0.22px;">60</div><div style="position:absolute;left:0.00px;top:311.90px;width:1024.00px;height:16.92px;background:#ffffff"></div><div style="position:absolute;white-space:nowrap;overflow:hidden;line-height:1;font-family:'Liberation Sans',sans-serif;-webkit-text-stroke:0.25px currentColor;left:0.0px;top:315.67px;width:89.5px;height:13.1px;padding-left:2.3px;font-size:10.5px;color:#2b2b2b;letter-spacing:-0.22px;">MA7_701_1</div><div style="position:absolute;white-space:nowrap;overflow:hidden;line-height:1;font-family:'Liberation Sans',sans-serif;-webkit-text-stroke:0.25px currentColor;left:89.5px;top:315.67px;width:81.0px;height:13.1px;padding-left:2.3px;font-size:10.5px;color:#2b2b2b;letter-spacing:-0.22px;">NA</div><div style="position:absolute;white-space:nowrap;overflow:hidden;line-height:1;font-family:'Liberation Sans',sans-serif;-webkit-text-stroke:0.25px currentColor;left:170.5px;top:315.67px;width:110.5px;height:13.1px;padding-left:2.3px;font-size:10.5px;color:#2b2b2b;letter-spacing:-0.22px;">790</div><div style="position:absolute;left:171.0px;top:312.70px;width:0;height:0;border-top:4px solid #2e7a2e;border-right:4px solid transparent"></div><div style="position:absolute;white-space:nowrap;overflow:hidden;line-height:1;font-family:'Liberation Sans',sans-serif;-webkit-text-stroke:0.25px currentColor;left:281.0px;top:315.67px;width:133.5px;height:13.1px;padding-left:2.3px;font-size:10.5px;color:#2b2b2b;letter-spacing:-0.22px;">790</div><div style="position:absolute;left:281.5px;top:312.70px;width:0;height:0;border-top:4px solid #2e7a2e;border-right:4px solid transparent"></div><div style="position:absolute;white-space:nowrap;overflow:hidden;line-height:1;font-family:'Liberation Sans',sans-serif;-webkit-text-stroke:0.25px currentColor;left:414.5px;top:315.67px;width:95.0px;height:13.1px;padding-left:2.3px;font-size:10.5px;color:#2b2b2b;letter-spacing:-0.22px;">230/400V</div><div style="position:absolute;white-space:nowrap;overflow:hidden;line-height:1;font-family:'Liberation Sans',sans-serif;-webkit-text-stroke:0.25px currentColor;left:509.5px;top:315.67px;width:209.0px;height:13.1px;padding-left:2.3px;font-size:10.5px;color:#2b2b2b;letter-spacing:-0.22px;">MMF2020807487371</div><div style="position:absolute;white-space:nowrap;overflow:hidden;line-height:1;font-family:'Liberation Sans',sans-serif;-webkit-text-stroke:0.25px currentColor;left:718.5px;top:315.67px;width:133.0px;height:13.1px;padding-left:2.3px;font-size:10.5px;color:#2b2b2b;letter-spacing:-0.22px;">70</div><div style="position:absolute;left:0.00px;top:328.52px;width:1024.00px;height:16.92px;background:#ffffff"></div><div style="position:absolute;white-space:nowrap;overflow:hidden;line-height:1;font-family:'Liberation Sans',sans-serif;-webkit-text-stroke:0.25px currentColor;left:0.0px;top:332.29px;width:89.5px;height:13.1px;padding-left:2.3px;font-size:10.5px;color:#2b2b2b;letter-spacing:-0.22px;">MA7_702_1</div><div style="position:absolute;white-space:nowrap;overflow:hidden;line-height:1;font-family:'Liberation Sans',sans-serif;-webkit-text-stroke:0.25px currentColor;left:89.5px;top:332.29px;width:81.0px;height:13.1px;padding-left:2.3px;font-size:10.5px;color:#2b2b2b;letter-spacing:-0.22px;">NA</div><div style="position:absolute;white-space:nowrap;overflow:hidden;line-height:1;font-family:'Liberation Sans',sans-serif;-webkit-text-stroke:0.25px currentColor;left:170.5px;top:332.29px;width:110.5px;height:13.1px;padding-left:2.3px;font-size:10.5px;color:#2b2b2b;letter-spacing:-0.22px;">789</div><div style="position:absolute;left:171.0px;top:329.32px;width:0;height:0;border-top:4px solid #2e7a2e;border-right:4px solid transparent"></div><div style="position:absolute;white-space:nowrap;overflow:hidden;line-height:1;font-family:'Liberation Sans',sans-serif;-webkit-text-stroke:0.25px currentColor;left:281.0px;top:332.29px;width:133.5px;height:13.1px;padding-left:2.3px;font-size:10.5px;color:#2b2b2b;letter-spacing:-0.22px;">789</div><div style="position:absolute;left:281.5px;top:329.32px;width:0;height:0;border-top:4px solid #2e7a2e;border-right:4px solid transparent"></div><div style="position:absolute;white-space:nowrap;overflow:hidden;line-height:1;font-family:'Liberation Sans',sans-serif;-webkit-text-stroke:0.25px currentColor;left:414.5px;top:332.29px;width:95.0px;height:13.1px;padding-left:2.3px;font-size:10.5px;color:#2b2b2b;letter-spacing:-0.22px;">230/400V</div><div style="position:absolute;white-space:nowrap;overflow:hidden;line-height:1;font-family:'Liberation Sans',sans-serif;-webkit-text-stroke:0.25px currentColor;left:509.5px;top:332.29px;width:209.0px;height:13.1px;padding-left:2.3px;font-size:10.5px;color:#2b2b2b;letter-spacing:-0.22px;">MMF2020807487372</div><div style="position:absolute;white-space:nowrap;overflow:hidden;line-height:1;font-family:'Liberation Sans',sans-serif;-webkit-text-stroke:0.25px currentColor;left:718.5px;top:332.29px;width:133.0px;height:13.1px;padding-left:2.3px;font-size:10.5px;color:#2b2b2b;letter-spacing:-0.22px;">70</div><div style="position:absolute;left:0.00px;top:345.14px;width:1024.00px;height:16.92px;background:#ffffff"></div><div style="position:absolute;white-space:nowrap;overflow:hidden;line-height:1;font-family:'Liberation Sans',sans-serif;-webkit-text-stroke:0.25px currentColor;left:0.0px;top:348.91px;width:89.5px;height:13.1px;padding-left:2.3px;font-size:10.5px;color:#2b2b2b;letter-spacing:-0.22px;">MA7_703_1</div><div style="position:absolute;white-space:nowrap;overflow:hidden;line-height:1;font-family:'Liberation Sans',sans-serif;-webkit-text-stroke:0.25px currentColor;left:89.5px;top:348.91px;width:81.0px;height:13.1px;padding-left:2.3px;font-size:10.5px;color:#2b2b2b;letter-spacing:-0.22px;">NA</div><div style="position:absolute;white-space:nowrap;overflow:hidden;line-height:1;font-family:'Liberation Sans',sans-serif;-webkit-text-stroke:0.25px currentColor;left:170.5px;top:348.91px;width:110.5px;height:13.1px;padding-left:2.3px;font-size:10.5px;color:#2b2b2b;letter-spacing:-0.22px;">788</div><div style="position:absolute;left:171.0px;top:345.94px;width:0;height:0;border-top:4px solid #2e7a2e;border-right:4px solid transparent"></div><div style="position:absolute;white-space:nowrap;overflow:hidden;line-height:1;font-family:'Liberation Sans',sans-serif;-webkit-text-stroke:0.25px currentColor;left:281.0px;top:348.91px;width:133.5px;height:13.1px;padding-left:2.3px;font-size:10.5px;color:#2b2b2b;letter-spacing:-0.22px;">788</div><div style="position:absolute;left:281.5px;top:345.94px;width:0;height:0;border-top:4px solid #2e7a2e;border-right:4px solid transparent"></div><div style="position:absolute;white-space:nowrap;overflow:hidden;line-height:1;font-family:'Liberation Sans',sans-serif;-webkit-text-stroke:0.25px currentColor;left:414.5px;top:348.91px;width:95.0px;height:13.1px;padding-left:2.3px;font-size:10.5px;color:#2b2b2b;letter-spacing:-0.22px;">230/400V</div><div style="position:absolute;white-space:nowrap;overflow:hidden;line-height:1;font-family:'Liberation Sans',sans-serif;-webkit-text-stroke:0.25px currentColor;left:509.5px;top:348.91px;width:209.0px;height:13.1px;padding-left:2.3px;font-size:10.5px;color:#2b2b2b;letter-spacing:-0.22px;">ALH2020807014319</div><div style="position:absolute;white-space:nowrap;overflow:hidden;line-height:1;font-family:'Liberation Sans',sans-serif;-webkit-text-stroke:0.25px currentColor;left:718.5px;top:348.91px;width:133.0px;height:13.1px;padding-left:2.3px;font-size:10.5px;color:#2b2b2b;letter-spacing:-0.22px;">70</div><div style="position:absolute;left:0.00px;top:361.76px;width:1024.00px;height:16.92px;background:#ffffff"></div><div style="position:absolute;white-space:nowrap;overflow:hidden;line-height:1;font-family:'Liberation Sans',sans-serif;-webkit-text-stroke:0.25px currentColor;left:0.0px;top:365.53px;width:89.5px;height:13.1px;padding-left:2.3px;font-size:10.5px;color:#2b2b2b;letter-spacing:-0.22px;">MA7_704_1</div><div style="position:absolute;white-space:nowrap;overflow:hidden;line-height:1;font-family:'Liberation Sans',sans-serif;-webkit-text-stroke:0.25px currentColor;left:89.5px;top:365.53px;width:81.0px;height:13.1px;padding-left:2.3px;font-size:10.5px;color:#2b2b2b;letter-spacing:-0.22px;">NA</div><div style="position:absolute;white-space:nowrap;overflow:hidden;line-height:1;font-family:'Liberation Sans',sans-serif;-webkit-text-stroke:0.25px currentColor;left:170.5px;top:365.53px;width:110.5px;height:13.1px;padding-left:2.3px;font-size:10.5px;color:#2b2b2b;letter-spacing:-0.22px;">602</div><div style="position:absolute;left:171.0px;top:362.56px;width:0;height:0;border-top:4px solid #2e7a2e;border-right:4px solid transparent"></div><div style="position:absolute;white-space:nowrap;overflow:hidden;line-height:1;font-family:'Liberation Sans',sans-serif;-webkit-text-stroke:0.25px currentColor;left:281.0px;top:365.53px;width:133.5px;height:13.1px;padding-left:2.3px;font-size:10.5px;color:#2b2b2b;letter-spacing:-0.22px;">602</div><div style="position:absolute;left:281.5px;top:362.56px;width:0;height:0;border-top:4px solid #2e7a2e;border-right:4px solid transparent"></div><div style="position:absolute;white-space:nowrap;overflow:hidden;line-height:1;font-family:'Liberation Sans',sans-serif;-webkit-text-stroke:0.25px currentColor;left:414.5px;top:365.53px;width:95.0px;height:13.1px;padding-left:2.3px;font-size:10.5px;color:#2b2b2b;letter-spacing:-0.22px;">230/400V</div><div style="position:absolute;white-space:nowrap;overflow:hidden;line-height:1;font-family:'Liberation Sans',sans-serif;-webkit-text-stroke:0.25px currentColor;left:509.5px;top:365.53px;width:209.0px;height:13.1px;padding-left:2.3px;font-size:10.5px;color:#2b2b2b;letter-spacing:-0.22px;">ALH2020807014312</div><div style="position:absolute;white-space:nowrap;overflow:hidden;line-height:1;font-family:'Liberation Sans',sans-serif;-webkit-text-stroke:0.25px currentColor;left:718.5px;top:365.53px;width:133.0px;height:13.1px;padding-left:2.3px;font-size:10.5px;color:#2b2b2b;letter-spacing:-0.22px;">60</div><div style="position:absolute;left:0.00px;top:378.38px;width:1024.00px;height:16.92px;background:#ffffff"></div><div style="position:absolute;white-space:nowrap;overflow:hidden;line-height:1;font-family:'Liberation Sans',sans-serif;-webkit-text-stroke:0.25px currentColor;left:0.0px;top:382.15px;width:89.5px;height:13.1px;padding-left:2.3px;font-size:10.5px;color:#2b2b2b;letter-spacing:-0.22px;">MA7_706_1</div><div style="position:absolute;white-space:nowrap;overflow:hidden;line-height:1;font-family:'Liberation Sans',sans-serif;-webkit-text-stroke:0.25px currentColor;left:89.5px;top:382.15px;width:81.0px;height:13.1px;padding-left:2.3px;font-size:10.5px;color:#2b2b2b;letter-spacing:-0.22px;">NA</div><div style="position:absolute;white-space:nowrap;overflow:hidden;line-height:1;font-family:'Liberation Sans',sans-serif;-webkit-text-stroke:0.25px currentColor;left:170.5px;top:382.15px;width:110.5px;height:13.1px;padding-left:2.3px;font-size:10.5px;color:#2b2b2b;letter-spacing:-0.22px;">787</div><div style="position:absolute;left:171.0px;top:379.18px;width:0;height:0;border-top:4px solid #2e7a2e;border-right:4px solid transparent"></div><div style="position:absolute;white-space:nowrap;overflow:hidden;line-height:1;font-family:'Liberation Sans',sans-serif;-webkit-text-stroke:0.25px currentColor;left:281.0px;top:382.15px;width:133.5px;height:13.1px;padding-left:2.3px;font-size:10.5px;color:#2b2b2b;letter-spacing:-0.22px;">787</div><div style="position:absolute;left:281.5px;top:379.18px;width:0;height:0;border-top:4px solid #2e7a2e;border-right:4px solid transparent"></div><div style="position:absolute;white-space:nowrap;overflow:hidden;line-height:1;font-family:'Liberation Sans',sans-serif;-webkit-text-stroke:0.25px currentColor;left:414.5px;top:382.15px;width:95.0px;height:13.1px;padding-left:2.3px;font-size:10.5px;color:#2b2b2b;letter-spacing:-0.22px;">230/400V</div><div style="position:absolute;white-space:nowrap;overflow:hidden;line-height:1;font-family:'Liberation Sans',sans-serif;-webkit-text-stroke:0.25px currentColor;left:509.5px;top:382.15px;width:209.0px;height:13.1px;padding-left:2.3px;font-size:10.5px;color:#2b2b2b;letter-spacing:-0.22px;">ECC2020807393986</div><div style="position:absolute;white-space:nowrap;overflow:hidden;line-height:1;font-family:'Liberation Sans',sans-serif;-webkit-text-stroke:0.25px currentColor;left:718.5px;top:382.15px;width:133.0px;height:13.1px;padding-left:2.3px;font-size:10.5px;color:#2b2b2b;letter-spacing:-0.22px;">100</div><div style="position:absolute;left:0.00px;top:395.00px;width:1024.00px;height:16.92px;background:#ffffff"></div><div style="position:absolute;white-space:nowrap;overflow:hidden;line-height:1;font-family:'Liberation Sans',sans-serif;-webkit-text-stroke:0.25px currentColor;left:0.0px;top:398.77px;width:89.5px;height:13.1px;padding-left:2.3px;font-size:10.5px;color:#2b2b2b;letter-spacing:-0.22px;">MA7_707_1</div><div style="position:absolute;white-space:nowrap;overflow:hidden;line-height:1;font-family:'Liberation Sans',sans-serif;-webkit-text-stroke:0.25px currentColor;left:89.5px;top:398.77px;width:81.0px;height:13.1px;padding-left:2.3px;font-size:10.5px;color:#2b2b2b;letter-spacing:-0.22px;">NA</div><div style="position:absolute;white-space:nowrap;overflow:hidden;line-height:1;font-family:'Liberation Sans',sans-serif;-webkit-text-stroke:0.25px currentColor;left:170.5px;top:398.77px;width:110.5px;height:13.1px;padding-left:2.3px;font-size:10.5px;color:#2b2b2b;letter-spacing:-0.22px;">NR</div><div style="position:absolute;white-space:nowrap;overflow:hidden;line-height:1;font-family:'Liberation Sans',sans-serif;-webkit-text-stroke:0.25px currentColor;left:281.0px;top:398.77px;width:133.5px;height:13.1px;padding-left:2.3px;font-size:10.5px;color:#2b2b2b;letter-spacing:-0.22px;">NR</div><div style="position:absolute;white-space:nowrap;overflow:hidden;line-height:1;font-family:'Liberation Sans',sans-serif;-webkit-text-stroke:0.25px currentColor;left:414.5px;top:398.77px;width:95.0px;height:13.1px;padding-left:2.3px;font-size:10.5px;color:#2b2b2b;letter-spacing:-0.22px;">230/400V</div><div style="position:absolute;white-space:nowrap;overflow:hidden;line-height:1;font-family:'Liberation Sans',sans-serif;-webkit-text-stroke:0.25px currentColor;left:509.5px;top:398.77px;width:209.0px;height:13.1px;padding-left:2.3px;font-size:10.5px;color:#2b2b2b;letter-spacing:-0.22px;">ECC2020807393987</div><div style="position:absolute;white-space:nowrap;overflow:hidden;line-height:1;font-family:'Liberation Sans',sans-serif;-webkit-text-stroke:0.25px currentColor;left:718.5px;top:398.77px;width:133.0px;height:13.1px;padding-left:2.3px;font-size:10.5px;color:#2b2b2b;letter-spacing:-0.22px;">100</div><div style="position:absolute;left:0.00px;top:411.62px;width:1024.00px;height:16.92px;background:#ffffff"></div><div style="position:absolute;white-space:nowrap;overflow:hidden;line-height:1;font-family:'Liberation Sans',sans-serif;-webkit-text-stroke:0.25px currentColor;left:0.0px;top:415.39px;width:89.5px;height:13.1px;padding-left:2.3px;font-size:10.5px;color:#2b2b2b;letter-spacing:-0.22px;">MA7_708_1</div><div style="position:absolute;white-space:nowrap;overflow:hidden;line-height:1;font-family:'Liberation Sans',sans-serif;-webkit-text-stroke:0.25px currentColor;left:89.5px;top:415.39px;width:81.0px;height:13.1px;padding-left:2.3px;font-size:10.5px;color:#2b2b2b;letter-spacing:-0.22px;">NA</div><div style="position:absolute;white-space:nowrap;overflow:hidden;line-height:1;font-family:'Liberation Sans',sans-serif;-webkit-text-stroke:0.25px currentColor;left:170.5px;top:415.39px;width:110.5px;height:13.1px;padding-left:2.3px;font-size:10.5px;color:#2b2b2b;letter-spacing:-0.22px;">9-3-830</div><div style="position:absolute;white-space:nowrap;overflow:hidden;line-height:1;font-family:'Liberation Sans',sans-serif;-webkit-text-stroke:0.25px currentColor;left:281.0px;top:415.39px;width:133.5px;height:13.1px;padding-left:2.3px;font-size:10.5px;color:#2b2b2b;letter-spacing:-0.22px;">9-3-830</div><div style="position:absolute;white-space:nowrap;overflow:hidden;line-height:1;font-family:'Liberation Sans',sans-serif;-webkit-text-stroke:0.25px currentColor;left:414.5px;top:415.39px;width:95.0px;height:13.1px;padding-left:2.3px;font-size:10.5px;color:#2b2b2b;letter-spacing:-0.22px;">230/400V</div><div style="position:absolute;white-space:nowrap;overflow:hidden;line-height:1;font-family:'Liberation Sans',sans-serif;-webkit-text-stroke:0.25px currentColor;left:509.5px;top:415.39px;width:209.0px;height:13.1px;padding-left:2.3px;font-size:10.5px;color:#2b2b2b;letter-spacing:-0.22px;">MMF2020807501065</div><div style="position:absolute;white-space:nowrap;overflow:hidden;line-height:1;font-family:'Liberation Sans',sans-serif;-webkit-text-stroke:0.25px currentColor;left:718.5px;top:415.39px;width:133.0px;height:13.1px;padding-left:2.3px;font-size:10.5px;color:#2b2b2b;letter-spacing:-0.22px;">70</div><div style="position:absolute;left:0.00px;top:428.24px;width:1024.00px;height:16.92px;background:#ffffff"></div><div style="position:absolute;white-space:nowrap;overflow:hidden;line-height:1;font-family:'Liberation Sans',sans-serif;-webkit-text-stroke:0.25px currentColor;left:0.0px;top:432.01px;width:89.5px;height:13.1px;padding-left:2.3px;font-size:10.5px;color:#2b2b2b;letter-spacing:-0.22px;">MA7_711_1</div><div style="position:absolute;white-space:nowrap;overflow:hidden;line-height:1;font-family:'Liberation Sans',sans-serif;-webkit-text-stroke:0.25px currentColor;left:89.5px;top:432.01px;width:81.0px;height:13.1px;padding-left:2.3px;font-size:10.5px;color:#2b2b2b;letter-spacing:-0.22px;">NA</div><div style="position:absolute;white-space:nowrap;overflow:hidden;line-height:1;font-family:'Liberation Sans',sans-serif;-webkit-text-stroke:0.25px currentColor;left:170.5px;top:432.01px;width:110.5px;height:13.1px;padding-left:2.3px;font-size:10.5px;color:#2b2b2b;letter-spacing:-0.22px;">823</div><div style="position:absolute;left:171.0px;top:429.04px;width:0;height:0;border-top:4px solid #2e7a2e;border-right:4px solid transparent"></div><div style="position:absolute;white-space:nowrap;overflow:hidden;line-height:1;font-family:'Liberation Sans',sans-serif;-webkit-text-stroke:0.25px currentColor;left:281.0px;top:432.01px;width:133.5px;height:13.1px;padding-left:2.3px;font-size:10.5px;color:#2b2b2b;letter-spacing:-0.22px;">823</div><div style="position:absolute;left:281.5px;top:429.04px;width:0;height:0;border-top:4px solid #2e7a2e;border-right:4px solid transparent"></div><div style="position:absolute;white-space:nowrap;overflow:hidden;line-height:1;font-family:'Liberation Sans',sans-serif;-webkit-text-stroke:0.25px currentColor;left:414.5px;top:432.01px;width:95.0px;height:13.1px;padding-left:2.3px;font-size:10.5px;color:#2b2b2b;letter-spacing:-0.22px;">230/400V</div><div style="position:absolute;white-space:nowrap;overflow:hidden;line-height:1;font-family:'Liberation Sans',sans-serif;-webkit-text-stroke:0.25px currentColor;left:509.5px;top:432.01px;width:209.0px;height:13.1px;padding-left:2.3px;font-size:10.5px;color:#2b2b2b;letter-spacing:-0.22px;">MMF2020807499539</div><div style="position:absolute;white-space:nowrap;overflow:hidden;line-height:1;font-family:'Liberation Sans',sans-serif;-webkit-text-stroke:0.25px currentColor;left:718.5px;top:432.01px;width:133.0px;height:13.1px;padding-left:2.3px;font-size:10.5px;color:#2b2b2b;letter-spacing:-0.22px;">100</div><div style="position:absolute;left:0.00px;top:444.86px;width:1024.00px;height:16.92px;background:#ffffff"></div><div style="position:absolute;white-space:nowrap;overflow:hidden;line-height:1;font-family:'Liberation Sans',sans-serif;-webkit-text-stroke:0.25px currentColor;left:0.0px;top:448.63px;width:89.5px;height:13.1px;padding-left:2.3px;font-size:10.5px;color:#2b2b2b;letter-spacing:-0.22px;">MA7_714_1</div><div style="position:absolute;white-space:nowrap;overflow:hidden;line-height:1;font-family:'Liberation Sans',sans-serif;-webkit-text-stroke:0.25px currentColor;left:89.5px;top:448.63px;width:81.0px;height:13.1px;padding-left:2.3px;font-size:10.5px;color:#2b2b2b;letter-spacing:-0.22px;">NA</div><div style="position:absolute;white-space:nowrap;overflow:hidden;line-height:1;font-family:'Liberation Sans',sans-serif;-webkit-text-stroke:0.25px currentColor;left:170.5px;top:448.63px;width:110.5px;height:13.1px;padding-left:2.3px;font-size:10.5px;color:#2b2b2b;letter-spacing:-0.22px;">NA</div><div style="position:absolute;white-space:nowrap;overflow:hidden;line-height:1;font-family:'Liberation Sans',sans-serif;-webkit-text-stroke:0.25px currentColor;left:281.0px;top:448.63px;width:133.5px;height:13.1px;padding-left:2.3px;font-size:10.5px;color:#2b2b2b;letter-spacing:-0.22px;">NA</div><div style="position:absolute;white-space:nowrap;overflow:hidden;line-height:1;font-family:'Liberation Sans',sans-serif;-webkit-text-stroke:0.25px currentColor;left:414.5px;top:448.63px;width:95.0px;height:13.1px;padding-left:2.3px;font-size:10.5px;color:#2b2b2b;letter-spacing:-0.22px;">230/400V</div><div style="position:absolute;white-space:nowrap;overflow:hidden;line-height:1;font-family:'Liberation Sans',sans-serif;-webkit-text-stroke:0.25px currentColor;left:509.5px;top:448.63px;width:209.0px;height:13.1px;padding-left:2.3px;font-size:10.5px;color:#2b2b2b;letter-spacing:-0.22px;">HLY2020717038955</div><div style="position:absolute;white-space:nowrap;overflow:hidden;line-height:1;font-family:'Liberation Sans',sans-serif;-webkit-text-stroke:0.25px currentColor;left:718.5px;top:448.63px;width:133.0px;height:13.1px;padding-left:2.3px;font-size:10.5px;color:#2b2b2b;letter-spacing:-0.22px;">160</div><div style="position:absolute;left:0.00px;top:461.48px;width:1024.00px;height:16.92px;background:#ffffff"></div><div style="position:absolute;white-space:nowrap;overflow:hidden;line-height:1;font-family:'Liberation Sans',sans-serif;-webkit-text-stroke:0.25px currentColor;left:0.0px;top:465.25px;width:89.5px;height:13.1px;padding-left:2.3px;font-size:10.5px;color:#2b2b2b;letter-spacing:-0.22px;">MA7_714_2</div><div style="position:absolute;white-space:nowrap;overflow:hidden;line-height:1;font-family:'Liberation Sans',sans-serif;-webkit-text-stroke:0.25px currentColor;left:89.5px;top:465.25px;width:81.0px;height:13.1px;padding-left:2.3px;font-size:10.5px;color:#2b2b2b;letter-spacing:-0.22px;">NA</div><div style="position:absolute;white-space:nowrap;overflow:hidden;line-height:1;font-family:'Liberation Sans',sans-serif;-webkit-text-stroke:0.25px currentColor;left:170.5px;top:465.25px;width:110.5px;height:13.1px;padding-left:2.3px;font-size:10.5px;color:#2b2b2b;letter-spacing:-0.22px;">770</div><div style="position:absolute;left:171.0px;top:462.28px;width:0;height:0;border-top:4px solid #2e7a2e;border-right:4px solid transparent"></div><div style="position:absolute;white-space:nowrap;overflow:hidden;line-height:1;font-family:'Liberation Sans',sans-serif;-webkit-text-stroke:0.25px currentColor;left:281.0px;top:465.25px;width:133.5px;height:13.1px;padding-left:2.3px;font-size:10.5px;color:#2b2b2b;letter-spacing:-0.22px;">770</div><div style="position:absolute;left:281.5px;top:462.28px;width:0;height:0;border-top:4px solid #2e7a2e;border-right:4px solid transparent"></div><div style="position:absolute;white-space:nowrap;overflow:hidden;line-height:1;font-family:'Liberation Sans',sans-serif;-webkit-text-stroke:0.25px currentColor;left:414.5px;top:465.25px;width:95.0px;height:13.1px;padding-left:2.3px;font-size:10.5px;color:#2b2b2b;letter-spacing:-0.22px;">230/400V</div><div style="position:absolute;white-space:nowrap;overflow:hidden;line-height:1;font-family:'Liberation Sans',sans-serif;-webkit-text-stroke:0.25px currentColor;left:509.5px;top:465.25px;width:209.0px;height:13.1px;padding-left:2.3px;font-size:10.5px;color:#2b2b2b;letter-spacing:-0.22px;">ECC2220830397432</div><div style="position:absolute;white-space:nowrap;overflow:hidden;line-height:1;font-family:'Liberation Sans',sans-serif;-webkit-text-stroke:0.25px currentColor;left:718.5px;top:465.25px;width:133.0px;height:13.1px;padding-left:2.3px;font-size:10.5px;color:#2b2b2b;letter-spacing:-0.22px;">100</div><div style="position:absolute;left:0.00px;top:478.10px;width:1024.00px;height:16.92px;background:#ffffff"></div><div style="position:absolute;white-space:nowrap;overflow:hidden;line-height:1;font-family:'Liberation Sans',sans-serif;-webkit-text-stroke:0.25px currentColor;left:0.0px;top:481.87px;width:89.5px;height:13.1px;padding-left:2.3px;font-size:10.5px;color:#2b2b2b;letter-spacing:-0.22px;">MA7_716_1</div><div style="position:absolute;white-space:nowrap;overflow:hidden;line-height:1;font-family:'Liberation Sans',sans-serif;-webkit-text-stroke:0.25px currentColor;left:89.5px;top:481.87px;width:81.0px;height:13.1px;padding-left:2.3px;font-size:10.5px;color:#2b2b2b;letter-spacing:-0.22px;">NA</div><div style="position:absolute;white-space:nowrap;overflow:hidden;line-height:1;font-family:'Liberation Sans',sans-serif;-webkit-text-stroke:0.25px currentColor;left:170.5px;top:481.87px;width:110.5px;height:13.1px;padding-left:2.3px;font-size:10.5px;color:#2b2b2b;letter-spacing:-0.22px;">NA</div><div style="position:absolute;white-space:nowrap;overflow:hidden;line-height:1;font-family:'Liberation Sans',sans-serif;-webkit-text-stroke:0.25px currentColor;left:281.0px;top:481.87px;width:133.5px;height:13.1px;padding-left:2.3px;font-size:10.5px;color:#2b2b2b;letter-spacing:-0.22px;">NA</div><div style="position:absolute;white-space:nowrap;overflow:hidden;line-height:1;font-family:'Liberation Sans',sans-serif;-webkit-text-stroke:0.25px currentColor;left:414.5px;top:481.87px;width:95.0px;height:13.1px;padding-left:2.3px;font-size:10.5px;color:#2b2b2b;letter-spacing:-0.22px;">230/400V</div><div style="position:absolute;white-space:nowrap;overflow:hidden;line-height:1;font-family:'Liberation Sans',sans-serif;-webkit-text-stroke:0.25px currentColor;left:509.5px;top:481.87px;width:209.0px;height:13.1px;padding-left:2.3px;font-size:10.5px;color:#2b2b2b;letter-spacing:-0.22px;">MMF2020807499537</div><div style="position:absolute;white-space:nowrap;overflow:hidden;line-height:1;font-family:'Liberation Sans',sans-serif;-webkit-text-stroke:0.25px currentColor;left:718.5px;top:481.87px;width:133.0px;height:13.1px;padding-left:2.3px;font-size:10.5px;color:#2b2b2b;letter-spacing:-0.22px;">60</div><div style="position:absolute;left:0.00px;top:494.72px;width:1024.00px;height:16.92px;background:#ffffff"></div><div style="position:absolute;white-space:nowrap;overflow:hidden;line-height:1;font-family:'Liberation Sans',sans-serif;-webkit-text-stroke:0.25px currentColor;left:0.0px;top:498.49px;width:89.5px;height:13.1px;padding-left:2.3px;font-size:10.5px;color:#2b2b2b;letter-spacing:-0.22px;">MA7_718_1</div><div style="position:absolute;white-space:nowrap;overflow:hidden;line-height:1;font-family:'Liberation Sans',sans-serif;-webkit-text-stroke:0.25px currentColor;left:89.5px;top:498.49px;width:81.0px;height:13.1px;padding-left:2.3px;font-size:10.5px;color:#2b2b2b;letter-spacing:-0.22px;">NA</div><div style="position:absolute;white-space:nowrap;overflow:hidden;line-height:1;font-family:'Liberation Sans',sans-serif;-webkit-text-stroke:0.25px currentColor;left:170.5px;top:498.49px;width:110.5px;height:13.1px;padding-left:2.3px;font-size:10.5px;color:#2b2b2b;letter-spacing:-0.22px;">734</div><div style="position:absolute;left:171.0px;top:495.52px;width:0;height:0;border-top:4px solid #2e7a2e;border-right:4px solid transparent"></div><div style="position:absolute;white-space:nowrap;overflow:hidden;line-height:1;font-family:'Liberation Sans',sans-serif;-webkit-text-stroke:0.25px currentColor;left:281.0px;top:498.49px;width:133.5px;height:13.1px;padding-left:2.3px;font-size:10.5px;color:#2b2b2b;letter-spacing:-0.22px;">734</div><div style="position:absolute;left:281.5px;top:495.52px;width:0;height:0;border-top:4px solid #2e7a2e;border-right:4px solid transparent"></div><div style="position:absolute;white-space:nowrap;overflow:hidden;line-height:1;font-family:'Liberation Sans',sans-serif;-webkit-text-stroke:0.25px currentColor;left:414.5px;top:498.49px;width:95.0px;height:13.1px;padding-left:2.3px;font-size:10.5px;color:#2b2b2b;letter-spacing:-0.22px;">230/400V</div><div style="position:absolute;white-space:nowrap;overflow:hidden;line-height:1;font-family:'Liberation Sans',sans-serif;-webkit-text-stroke:0.25px currentColor;left:509.5px;top:498.49px;width:209.0px;height:13.1px;padding-left:2.3px;font-size:10.5px;color:#2b2b2b;letter-spacing:-0.22px;">MMF2020807499543</div><div style="position:absolute;white-space:nowrap;overflow:hidden;line-height:1;font-family:'Liberation Sans',sans-serif;-webkit-text-stroke:0.25px currentColor;left:718.5px;top:498.49px;width:133.0px;height:13.1px;padding-left:2.3px;font-size:10.5px;color:#2b2b2b;letter-spacing:-0.22px;">60</div><div style="position:absolute;left:0.00px;top:511.34px;width:1024.00px;height:16.92px;background:#ffffff"></div><div style="position:absolute;white-space:nowrap;overflow:hidden;line-height:1;font-family:'Liberation Sans',sans-serif;-webkit-text-stroke:0.25px currentColor;left:0.0px;top:515.11px;width:89.5px;height:13.1px;padding-left:2.3px;font-size:10.5px;color:#2b2b2b;letter-spacing:-0.22px;">MA7_719_1</div><div style="position:absolute;white-space:nowrap;overflow:hidden;line-height:1;font-family:'Liberation Sans',sans-serif;-webkit-text-stroke:0.25px currentColor;left:89.5px;top:515.11px;width:81.0px;height:13.1px;padding-left:2.3px;font-size:10.5px;color:#2b2b2b;letter-spacing:-0.22px;">NA</div><div style="position:absolute;white-space:nowrap;overflow:hidden;line-height:1;font-family:'Liberation Sans',sans-serif;-webkit-text-stroke:0.25px currentColor;left:170.5px;top:515.11px;width:110.5px;height:13.1px;padding-left:2.3px;font-size:10.5px;color:#2b2b2b;letter-spacing:-0.22px;">NA</div><div style="position:absolute;white-space:nowrap;overflow:hidden;line-height:1;font-family:'Liberation Sans',sans-serif;-webkit-text-stroke:0.25px currentColor;left:281.0px;top:515.11px;width:133.5px;height:13.1px;padding-left:2.3px;font-size:10.5px;color:#2b2b2b;letter-spacing:-0.22px;">NA</div><div style="position:absolute;white-space:nowrap;overflow:hidden;line-height:1;font-family:'Liberation Sans',sans-serif;-webkit-text-stroke:0.25px currentColor;left:414.5px;top:515.11px;width:95.0px;height:13.1px;padding-left:2.3px;font-size:10.5px;color:#2b2b2b;letter-spacing:-0.22px;">230/400V</div><div style="position:absolute;white-space:nowrap;overflow:hidden;line-height:1;font-family:'Liberation Sans',sans-serif;-webkit-text-stroke:0.25px currentColor;left:509.5px;top:515.11px;width:209.0px;height:13.1px;padding-left:2.3px;font-size:10.5px;color:#2b2b2b;letter-spacing:-0.22px;">MMF2020807499542</div><div style="position:absolute;white-space:nowrap;overflow:hidden;line-height:1;font-family:'Liberation Sans',sans-serif;-webkit-text-stroke:0.25px currentColor;left:718.5px;top:515.11px;width:133.0px;height:13.1px;padding-left:2.3px;font-size:10.5px;color:#2b2b2b;letter-spacing:-0.22px;">100</div><div style="position:absolute;left:0.00px;top:527.96px;width:1024.00px;height:16.92px;background:#ffffff"></div><div style="position:absolute;white-space:nowrap;overflow:hidden;line-height:1;font-family:'Liberation Sans',sans-serif;-webkit-text-stroke:0.25px currentColor;left:0.0px;top:531.73px;width:89.5px;height:13.1px;padding-left:2.3px;font-size:10.5px;color:#2b2b2b;letter-spacing:-0.22px;">MA7_728_1</div><div style="position:absolute;white-space:nowrap;overflow:hidden;line-height:1;font-family:'Liberation Sans',sans-serif;-webkit-text-stroke:0.25px currentColor;left:89.5px;top:531.73px;width:81.0px;height:13.1px;padding-left:2.3px;font-size:10.5px;color:#2b2b2b;letter-spacing:-0.22px;">NA</div><div style="position:absolute;white-space:nowrap;overflow:hidden;line-height:1;font-family:'Liberation Sans',sans-serif;-webkit-text-stroke:0.25px currentColor;left:170.5px;top:531.73px;width:110.5px;height:13.1px;padding-left:2.3px;font-size:10.5px;color:#2b2b2b;letter-spacing:-0.22px;">NA</div><div style="position:absolute;white-space:nowrap;overflow:hidden;line-height:1;font-family:'Liberation Sans',sans-serif;-webkit-text-stroke:0.25px currentColor;left:281.0px;top:531.73px;width:133.5px;height:13.1px;padding-left:2.3px;font-size:10.5px;color:#2b2b2b;letter-spacing:-0.22px;">NA</div><div style="position:absolute;white-space:nowrap;overflow:hidden;line-height:1;font-family:'Liberation Sans',sans-serif;-webkit-text-stroke:0.25px currentColor;left:414.5px;top:531.73px;width:95.0px;height:13.1px;padding-left:2.3px;font-size:10.5px;color:#2b2b2b;letter-spacing:-0.22px;">230/400V</div><div style="position:absolute;white-space:nowrap;overflow:hidden;line-height:1;font-family:'Liberation Sans',sans-serif;-webkit-text-stroke:0.25px currentColor;left:509.5px;top:531.73px;width:209.0px;height:13.1px;padding-left:2.3px;font-size:10.5px;color:#2b2b2b;letter-spacing:-0.22px;">ECC2020807376009</div><div style="position:absolute;white-space:nowrap;overflow:hidden;line-height:1;font-family:'Liberation Sans',sans-serif;-webkit-text-stroke:0.25px currentColor;left:718.5px;top:531.73px;width:133.0px;height:13.1px;padding-left:2.3px;font-size:10.5px;color:#2b2b2b;letter-spacing:-0.22px;">60</div><div style="position:absolute;left:0.00px;top:544.58px;width:1024.00px;height:16.92px;background:#ffffff"></div><div style="position:absolute;white-space:nowrap;overflow:hidden;line-height:1;font-family:'Liberation Sans',sans-serif;-webkit-text-stroke:0.25px currentColor;left:0.0px;top:548.35px;width:89.5px;height:13.1px;padding-left:2.3px;font-size:10.5px;color:#2b2b2b;letter-spacing:-0.22px;">MA7_728_2</div><div style="position:absolute;white-space:nowrap;overflow:hidden;line-height:1;font-family:'Liberation Sans',sans-serif;-webkit-text-stroke:0.25px currentColor;left:89.5px;top:548.35px;width:81.0px;height:13.1px;padding-left:2.3px;font-size:10.5px;color:#2b2b2b;letter-spacing:-0.22px;">NA</div><div style="position:absolute;white-space:nowrap;overflow:hidden;line-height:1;font-family:'Liberation Sans',sans-serif;-webkit-text-stroke:0.25px currentColor;left:170.5px;top:548.35px;width:110.5px;height:13.1px;padding-left:2.3px;font-size:10.5px;color:#2b2b2b;letter-spacing:-0.22px;">NA</div><div style="position:absolute;white-space:nowrap;overflow:hidden;line-height:1;font-family:'Liberation Sans',sans-serif;-webkit-text-stroke:0.25px currentColor;left:281.0px;top:548.35px;width:133.5px;height:13.1px;padding-left:2.3px;font-size:10.5px;color:#2b2b2b;letter-spacing:-0.22px;">NA</div><div style="position:absolute;white-space:nowrap;overflow:hidden;line-height:1;font-family:'Liberation Sans',sans-serif;-webkit-text-stroke:0.25px currentColor;left:414.5px;top:548.35px;width:95.0px;height:13.1px;padding-left:2.3px;font-size:10.5px;color:#2b2b2b;letter-spacing:-0.22px;">230/400V</div><div style="position:absolute;white-space:nowrap;overflow:hidden;line-height:1;font-family:'Liberation Sans',sans-serif;-webkit-text-stroke:0.25px currentColor;left:509.5px;top:548.35px;width:209.0px;height:13.1px;padding-left:2.3px;font-size:10.5px;color:#2b2b2b;letter-spacing:-0.22px;">MMF2020807482784</div><div style="position:absolute;white-space:nowrap;overflow:hidden;line-height:1;font-family:'Liberation Sans',sans-serif;-webkit-text-stroke:0.25px currentColor;left:718.5px;top:548.35px;width:133.0px;height:13.1px;padding-left:2.3px;font-size:10.5px;color:#2b2b2b;letter-spacing:-0.22px;">60</div><div style="position:absolute;left:0.00px;top:561.20px;width:1024.00px;height:16.92px;background:#ffffff"></div><div style="position:absolute;white-space:nowrap;overflow:hidden;line-height:1;font-family:'Liberation Sans',sans-serif;-webkit-text-stroke:0.25px currentColor;left:0.0px;top:564.97px;width:89.5px;height:13.1px;padding-left:2.3px;font-size:10.5px;color:#2b2b2b;letter-spacing:-0.22px;">MA7_731_1</div><div style="position:absolute;white-space:nowrap;overflow:hidden;line-height:1;font-family:'Liberation Sans',sans-serif;-webkit-text-stroke:0.25px currentColor;left:89.5px;top:564.97px;width:81.0px;height:13.1px;padding-left:2.3px;font-size:10.5px;color:#2b2b2b;letter-spacing:-0.22px;">NA</div><div style="position:absolute;white-space:nowrap;overflow:hidden;line-height:1;font-family:'Liberation Sans',sans-serif;-webkit-text-stroke:0.25px currentColor;left:170.5px;top:564.97px;width:110.5px;height:13.1px;padding-left:2.3px;font-size:10.5px;color:#2b2b2b;letter-spacing:-0.22px;">NA</div><div style="position:absolute;white-space:nowrap;overflow:hidden;line-height:1;font-family:'Liberation Sans',sans-serif;-webkit-text-stroke:0.25px currentColor;left:281.0px;top:564.97px;width:133.5px;height:13.1px;padding-left:2.3px;font-size:10.5px;color:#2b2b2b;letter-spacing:-0.22px;">NA</div><div style="position:absolute;white-space:nowrap;overflow:hidden;line-height:1;font-family:'Liberation Sans',sans-serif;-webkit-text-stroke:0.25px currentColor;left:414.5px;top:564.97px;width:95.0px;height:13.1px;padding-left:2.3px;font-size:10.5px;color:#2b2b2b;letter-spacing:-0.22px;">230/400V</div><div style="position:absolute;white-space:nowrap;overflow:hidden;line-height:1;font-family:'Liberation Sans',sans-serif;-webkit-text-stroke:0.25px currentColor;left:509.5px;top:564.97px;width:209.0px;height:13.1px;padding-left:2.3px;font-size:10.5px;color:#2b2b2b;letter-spacing:-0.22px;">ECC2020807376013</div><div style="position:absolute;white-space:nowrap;overflow:hidden;line-height:1;font-family:'Liberation Sans',sans-serif;-webkit-text-stroke:0.25px currentColor;left:718.5px;top:564.97px;width:133.0px;height:13.1px;padding-left:2.3px;font-size:10.5px;color:#2b2b2b;letter-spacing:-0.22px;">60</div><div style="position:absolute;white-space:nowrap;overflow:hidden;line-height:1;font-family:'Liberation Sans',sans-serif;-webkit-text-stroke:0.25px currentColor;left:851.5px;top:564.97px;width:123.5px;height:13.1px;padding-left:2.3px;font-size:10.5px;color:#2b2b2b;letter-spacing:-0.22px;">Other</div><div style="position:absolute;white-space:nowrap;overflow:hidden;line-height:1;font-family:'Liberation Sans',sans-serif;-webkit-text-stroke:0.25px currentColor;left:975.0px;top:564.97px;width:125.0px;height:13.1px;padding-left:2.3px;font-size:10.5px;color:#2b2b2b;letter-spacing:-0.22px;">In Service</div><div style="position:absolute;left:0.00px;top:577.82px;width:1024.00px;height:16.92px;background:#92d050"></div><div style="position:absolute;white-space:nowrap;overflow:hidden;line-height:1;font-family:'Liberation Sans',sans-serif;-webkit-text-stroke:0.25px currentColor;left:0.0px;top:581.59px;width:89.5px;height:13.1px;padding-left:2.3px;font-size:10.5px;color:#1c3f14;letter-spacing:-0.22px;">MA7_734_1</div><div style="position:absolute;white-space:nowrap;overflow:hidden;line-height:1;font-family:'Liberation Sans',sans-serif;-webkit-text-stroke:0.25px currentColor;left:89.5px;top:581.59px;width:81.0px;height:13.1px;padding-left:2.3px;font-size:10.5px;color:#1c3f14;letter-spacing:-0.22px;">NA</div><div style="position:absolute;white-space:nowrap;overflow:hidden;line-height:1;font-family:'Liberation Sans',sans-serif;-webkit-text-stroke:0.25px currentColor;left:170.5px;top:581.59px;width:110.5px;height:13.1px;padding-left:2.3px;font-size:10.5px;color:#1c3f14;letter-spacing:-0.22px;">1-89/510</div><div style="position:absolute;white-space:nowrap;overflow:hidden;line-height:1;font-family:'Liberation Sans',sans-serif;-webkit-text-stroke:0.25px currentColor;left:281.0px;top:581.59px;width:133.5px;height:13.1px;padding-left:2.3px;font-size:10.5px;color:#1c3f14;letter-spacing:-0.22px;">1-89/510</div><div style="position:absolute;white-space:nowrap;overflow:hidden;line-height:1;font-family:'Liberation Sans',sans-serif;-webkit-text-stroke:0.25px currentColor;left:414.5px;top:581.59px;width:95.0px;height:13.1px;padding-left:2.3px;font-size:10.5px;color:#1c3f14;letter-spacing:-0.22px;">230/400V</div><div style="position:absolute;white-space:nowrap;overflow:hidden;line-height:1;font-family:'Liberation Sans',sans-serif;-webkit-text-stroke:0.25px currentColor;left:509.5px;top:581.59px;width:209.0px;height:13.1px;padding-left:2.3px;font-size:10.5px;color:#1c3f14;letter-spacing:-0.22px;">ECC2020807376037</div><div style="position:absolute;white-space:nowrap;overflow:hidden;line-height:1;font-family:'Liberation Sans',sans-serif;-webkit-text-stroke:0.25px currentColor;left:718.5px;top:581.59px;width:133.0px;height:13.1px;padding-left:2.3px;font-size:10.5px;color:#1c3f14;letter-spacing:-0.22px;">60</div><div style="position:absolute;white-space:nowrap;overflow:hidden;line-height:1;font-family:'Liberation Sans',sans-serif;-webkit-text-stroke:0.25px currentColor;left:851.5px;top:581.59px;width:123.5px;height:13.1px;padding-left:2.3px;font-size:10.5px;color:#1c3f14;letter-spacing:-0.22px;">Other</div><div style="position:absolute;white-space:nowrap;overflow:hidden;line-height:1;font-family:'Liberation Sans',sans-serif;-webkit-text-stroke:0.25px currentColor;left:975.0px;top:581.59px;width:125.0px;height:13.1px;padding-left:2.3px;font-size:10.5px;color:#1c3f14;letter-spacing:-0.22px;">In Service</div><div style="position:absolute;left:0.00px;top:594.44px;width:1024.00px;height:16.92px;background:#ffffff"></div><div style="position:absolute;white-space:nowrap;overflow:hidden;line-height:1;font-family:'Liberation Sans',sans-serif;-webkit-text-stroke:0.25px currentColor;left:0.0px;top:598.21px;width:89.5px;height:13.1px;padding-left:2.3px;font-size:10.5px;color:#2b2b2b;letter-spacing:-0.22px;">MA7_735_1</div><div style="position:absolute;white-space:nowrap;overflow:hidden;line-height:1;font-family:'Liberation Sans',sans-serif;-webkit-text-stroke:0.25px currentColor;left:89.5px;top:598.21px;width:81.0px;height:13.1px;padding-left:2.3px;font-size:10.5px;color:#2b2b2b;letter-spacing:-0.22px;">NA</div><div style="position:absolute;white-space:nowrap;overflow:hidden;line-height:1;font-family:'Liberation Sans',sans-serif;-webkit-text-stroke:0.25px currentColor;left:170.5px;top:598.21px;width:110.5px;height:13.1px;padding-left:2.3px;font-size:10.5px;color:#2b2b2b;letter-spacing:-0.22px;">772</div><div style="position:absolute;left:171.0px;top:595.24px;width:0;height:0;border-top:4px solid #2e7a2e;border-right:4px solid transparent"></div><div style="position:absolute;white-space:nowrap;overflow:hidden;line-height:1;font-family:'Liberation Sans',sans-serif;-webkit-text-stroke:0.25px currentColor;left:281.0px;top:598.21px;width:133.5px;height:13.1px;padding-left:2.3px;font-size:10.5px;color:#2b2b2b;letter-spacing:-0.22px;">772</div><div style="position:absolute;left:281.5px;top:595.24px;width:0;height:0;border-top:4px solid #2e7a2e;border-right:4px solid transparent"></div><div style="position:absolute;white-space:nowrap;overflow:hidden;line-height:1;font-family:'Liberation Sans',sans-serif;-webkit-text-stroke:0.25px currentColor;left:414.5px;top:598.21px;width:95.0px;height:13.1px;padding-left:2.3px;font-size:10.5px;color:#2b2b2b;letter-spacing:-0.22px;">230/400V</div><div style="position:absolute;white-space:nowrap;overflow:hidden;line-height:1;font-family:'Liberation Sans',sans-serif;-webkit-text-stroke:0.25px currentColor;left:509.5px;top:598.21px;width:209.0px;height:13.1px;padding-left:2.3px;font-size:10.5px;color:#2b2b2b;letter-spacing:-0.22px;">ECC2020807376021</div><div style="position:absolute;white-space:nowrap;overflow:hidden;line-height:1;font-family:'Liberation Sans',sans-serif;-webkit-text-stroke:0.25px currentColor;left:718.5px;top:598.21px;width:133.0px;height:13.1px;padding-left:2.3px;font-size:10.5px;color:#2b2b2b;letter-spacing:-0.22px;">100</div><div style="position:absolute;white-space:nowrap;overflow:hidden;line-height:1;font-family:'Liberation Sans',sans-serif;-webkit-text-stroke:0.25px currentColor;left:851.5px;top:598.21px;width:123.5px;height:13.1px;padding-left:2.3px;font-size:10.5px;color:#2b2b2b;letter-spacing:-0.22px;">Other</div><div style="position:absolute;white-space:nowrap;overflow:hidden;line-height:1;font-family:'Liberation Sans',sans-serif;-webkit-text-stroke:0.25px currentColor;left:975.0px;top:598.21px;width:125.0px;height:13.1px;padding-left:2.3px;font-size:10.5px;color:#2b2b2b;letter-spacing:-0.22px;">In Service</div><div style="position:absolute;left:0.00px;top:611.06px;width:1024.00px;height:16.92px;background:#92d050"></div><div style="position:absolute;white-space:nowrap;overflow:hidden;line-height:1;font-family:'Liberation Sans',sans-serif;-webkit-text-stroke:0.25px currentColor;left:0.0px;top:614.83px;width:89.5px;height:13.1px;padding-left:2.3px;font-size:10.5px;color:#1c3f14;letter-spacing:-0.22px;">MA7_739_1</div><div style="position:absolute;white-space:nowrap;overflow:hidden;line-height:1;font-family:'Liberation Sans',sans-serif;-webkit-text-stroke:0.25px currentColor;left:89.5px;top:614.83px;width:81.0px;height:13.1px;padding-left:2.3px;font-size:10.5px;color:#1c3f14;letter-spacing:-0.22px;">NA</div><div style="position:absolute;white-space:nowrap;overflow:hidden;line-height:1;font-family:'Liberation Sans',sans-serif;-webkit-text-stroke:0.25px currentColor;left:170.5px;top:614.83px;width:110.5px;height:13.1px;padding-left:2.3px;font-size:10.5px;color:#1c3f14;letter-spacing:-0.22px;">NA</div><div style="position:absolute;white-space:nowrap;overflow:hidden;line-height:1;font-family:'Liberation Sans',sans-serif;-webkit-text-stroke:0.25px currentColor;left:281.0px;top:614.83px;width:133.5px;height:13.1px;padding-left:2.3px;font-size:10.5px;color:#1c3f14;letter-spacing:-0.22px;">NA</div><div style="position:absolute;white-space:nowrap;overflow:hidden;line-height:1;font-family:'Liberation Sans',sans-serif;-webkit-text-stroke:0.25px currentColor;left:414.5px;top:614.83px;width:95.0px;height:13.1px;padding-left:2.3px;font-size:10.5px;color:#1c3f14;letter-spacing:-0.22px;">230/400V</div><div style="position:absolute;white-space:nowrap;overflow:hidden;line-height:1;font-family:'Liberation Sans',sans-serif;-webkit-text-stroke:0.25px currentColor;left:509.5px;top:614.83px;width:209.0px;height:13.1px;padding-left:2.3px;font-size:10.5px;color:#1c3f14;letter-spacing:-0.22px;">ECC2020807376017</div><div style="position:absolute;white-space:nowrap;overflow:hidden;line-height:1;font-family:'Liberation Sans',sans-serif;-webkit-text-stroke:0.25px currentColor;left:718.5px;top:614.83px;width:133.0px;height:13.1px;padding-left:2.3px;font-size:10.5px;color:#1c3f14;letter-spacing:-0.22px;">60</div><div style="position:absolute;white-space:nowrap;overflow:hidden;line-height:1;font-family:'Liberation Sans',sans-serif;-webkit-text-stroke:0.25px currentColor;left:851.5px;top:614.83px;width:123.5px;height:13.1px;padding-left:2.3px;font-size:10.5px;color:#1c3f14;letter-spacing:-0.22px;">Residential</div><div style="position:absolute;white-space:nowrap;overflow:hidden;line-height:1;font-family:'Liberation Sans',sans-serif;-webkit-text-stroke:0.25px currentColor;left:975.0px;top:614.83px;width:125.0px;height:13.1px;padding-left:2.3px;font-size:10.5px;color:#1c3f14;letter-spacing:-0.22px;">In Service</div><div style="position:absolute;left:0.00px;top:627.68px;width:1024.00px;height:16.92px;background:#92d050"></div><div style="position:absolute;left:0.00px;top:228.00px;width:1024.00px;height:1.20px;background:rgba(0,0,0,0.62)"></div><div style="position:absolute;left:0.00px;top:245.00px;width:1024.00px;height:1.20px;background:rgba(0,0,0,0.62)"></div><div style="position:absolute;left:0.00px;top:262.00px;width:1024.00px;height:1.20px;background:rgba(0,0,0,0.62)"></div><div style="position:absolute;left:0.00px;top:278.00px;width:1024.00px;height:1.20px;background:rgba(0,0,0,0.62)"></div><div style="position:absolute;left:0.00px;top:295.00px;width:1024.00px;height:1.20px;background:rgba(0,0,0,0.62)"></div><div style="position:absolute;left:0.00px;top:311.00px;width:1024.00px;height:1.20px;background:rgba(0,0,0,0.62)"></div><div style="position:absolute;left:0.00px;top:328.00px;width:1024.00px;height:1.20px;background:rgba(0,0,0,0.62)"></div><div style="position:absolute;left:0.00px;top:345.00px;width:1024.00px;height:1.20px;background:rgba(0,0,0,0.62)"></div><div style="position:absolute;left:0.00px;top:361.00px;width:1024.00px;height:1.20px;background:rgba(0,0,0,0.62)"></div><div style="position:absolute;left:0.00px;top:378.00px;width:1024.00px;height:1.20px;background:rgba(0,0,0,0.62)"></div><div style="position:absolute;left:0.00px;top:394.00px;width:1024.00px;height:1.20px;background:rgba(0,0,0,0.62)"></div><div style="position:absolute;left:0.00px;top:411.00px;width:1024.00px;height:1.20px;background:rgba(0,0,0,0.62)"></div><div style="position:absolute;left:0.00px;top:428.00px;width:1024.00px;height:1.20px;background:rgba(0,0,0,0.62)"></div><div style="position:absolute;left:0.00px;top:444.00px;width:1024.00px;height:1.20px;background:rgba(0,0,0,0.62)"></div><div style="position:absolute;left:0.00px;top:461.00px;width:1024.00px;height:1.20px;background:rgba(0,0,0,0.62)"></div><div style="position:absolute;left:0.00px;top:478.00px;width:1024.00px;height:1.20px;background:rgba(0,0,0,0.62)"></div><div style="position:absolute;left:0.00px;top:494.00px;width:1024.00px;height:1.20px;background:rgba(0,0,0,0.62)"></div><div style="position:absolute;left:0.00px;top:511.00px;width:1024.00px;height:1.20px;background:rgba(0,0,0,0.62)"></div><div style="position:absolute;left:0.00px;top:527.00px;width:1024.00px;height:1.20px;background:rgba(0,0,0,0.62)"></div><div style="position:absolute;left:0.00px;top:544.00px;width:1024.00px;height:1.20px;background:rgba(0,0,0,0.62)"></div><div style="position:absolute;left:0.00px;top:561.00px;width:1024.00px;height:1.20px;background:rgba(0,0,0,0.62)"></div><div style="position:absolute;left:0.00px;top:577.00px;width:1024.00px;height:1.20px;background:rgba(0,0,0,0.62)"></div><div style="position:absolute;left:0.00px;top:594.00px;width:1024.00px;height:1.20px;background:rgba(0,0,0,0.62)"></div><div style="position:absolute;left:0.00px;top:611.00px;width:1024.00px;height:1.20px;background:rgba(0,0,0,0.62)"></div><div style="position:absolute;left:0.00px;top:627.00px;width:1024.00px;height:1.20px;background:rgba(0,0,0,0.62)"></div><div style="position:absolute;left:89.00px;top:194.00px;width:1.00px;height:438.00px;background:rgba(0,0,0,0.5)"></div><div style="position:absolute;left:170.00px;top:194.00px;width:1.00px;height:438.00px;background:rgba(0,0,0,0.5)"></div><div style="position:absolute;left:280.50px;top:194.00px;width:1.00px;height:438.00px;background:rgba(0,0,0,0.5)"></div><div style="position:absolute;left:414.00px;top:194.00px;width:1.00px;height:438.00px;background:rgba(0,0,0,0.5)"></div><div style="position:absolute;left:509.00px;top:194.00px;width:1.00px;height:438.00px;background:rgba(0,0,0,0.5)"></div><div style="position:absolute;left:718.00px;top:194.00px;width:1.00px;height:438.00px;background:rgba(0,0,0,0.5)"></div><div style="position:absolute;left:851.00px;top:194.00px;width:1.00px;height:438.00px;background:rgba(0,0,0,0.5)"></div><div style="position:absolute;left:974.50px;top:194.00px;width:1.00px;height:438.00px;background:rgba(0,0,0,0.5)"></div><div style="position:absolute;left:0.00px;top:631.80px;width:1024.00px;height:24.70px;background:#f3f3f3"></div><svg style="position:absolute;left:17px;top:641px" width="8" height="10" viewBox="0 0 8 10"><path d="M1.5 1l4.5 4-4.5 4" stroke="#555" stroke-width="1.2" fill="none"/></svg><div style="position:absolute;left:159.40px;top:637.00px;width:1.00px;height:16.00px;background:#e0e0e0"></div><div style="position:absolute;left:239.00px;top:637.00px;width:1.00px;height:16.00px;background:#e0e0e0"></div><div style="position:absolute;left:310.40px;top:637.00px;width:1.00px;height:16.00px;background:#e0e0e0"></div><div style="position:absolute;left:439.40px;top:637.00px;width:1.00px;height:16.00px;background:#e0e0e0"></div><div style="position:absolute;left:575.00px;top:637.00px;width:1.00px;height:16.00px;background:#e0e0e0"></div><div style="position:absolute;left:732.60px;top:637.00px;width:1.00px;height:16.00px;background:#e0e0e0"></div><div style="position:absolute;left:935.30px;top:637.00px;width:1.00px;height:16.00px;background:#e0e0e0"></div><div style="position:absolute;left:779.30px;top:634.40px;width:67.10px;height:21.10px;background:#ffffff"></div><div style="position:absolute;left:937.90px;top:635.20px;width:37.40px;height:20.30px;background:#e3e3e3;border-radius:2px"></div><div style="position:absolute;left:69.70px;top:639.96px;font-family:'Liberation Sans',sans-serif;font-size:11.50px;line-height:1;white-space:nowrap;color:#3d3d3d;-webkit-text-stroke:0.2px currentColor;transform:scaleX(0.917);transform-origin:0 0;">Substation_Area</div><div style="position:absolute;left:169.30px;top:639.96px;font-family:'Liberation Sans',sans-serif;font-size:11.50px;line-height:1;white-space:nowrap;color:#3d3d3d;-webkit-text-stroke:0.2px currentColor;transform:scaleX(0.950);transform-origin:0 0;">Transformer</div><div style="position:absolute;left:249.70px;top:639.96px;font-family:'Liberation Sans',sans-serif;font-size:11.50px;line-height:1;white-space:nowrap;color:#3d3d3d;-webkit-text-stroke:0.2px currentColor;transform:scaleX(0.861);transform-origin:0 0;">PMT_Fuse</div><div style="position:absolute;left:320.60px;top:639.96px;font-family:'Liberation Sans',sans-serif;font-size:11.50px;line-height:1;white-space:nowrap;color:#3d3d3d;-webkit-text-stroke:0.2px currentColor;transform:scaleX(0.930);transform-origin:0 0;">SubStationArea-(DPD)</div><div style="position:absolute;left:452.00px;top:639.96px;font-family:'Liberation Sans',sans-serif;font-size:11.50px;line-height:1;white-space:nowrap;color:#3d3d3d;-webkit-text-stroke:0.2px currentColor;transform:scaleX(0.933);transform-origin:0 0;">SubStationArea-Switch</div><div style="position:absolute;left:587.80px;top:639.96px;font-family:'Liberation Sans',sans-serif;font-size:11.50px;line-height:1;white-space:nowrap;color:#3d3d3d;-webkit-text-stroke:0.2px currentColor;transform:scaleX(0.916);transform-origin:0 0;">Distribution_Box_Area-Fuse</div><div style="position:absolute;left:741.30px;top:639.96px;font-family:'Liberation Sans',sans-serif;font-size:11.50px;line-height:1;white-space:nowrap;color:#3d3d3d;-webkit-text-stroke:0.2px currentColor;transform:scaleX(0.928);transform-origin:0 0;">RMU</div><div style="position:absolute;left:861.00px;top:639.96px;font-family:'Liberation Sans',sans-serif;font-size:11.50px;line-height:1;white-space:nowrap;color:#3d3d3d;-webkit-text-stroke:0.2px currentColor;transform:scaleX(0.918);transform-origin:0 0;">Service Point</div><div style="position:absolute;left:944.30px;top:639.96px;font-family:'Liberation Sans',sans-serif;font-size:11.50px;line-height:1;white-space:nowrap;color:#3d3d3d;-webkit-text-stroke:0.2px currentColor;transform:scaleX(0.851);transform-origin:0 0;">Cable_</div><div style="position:absolute;left:785.80px;top:638.36px;font-family:'Liberation Sans',sans-serif;font-size:11.50px;line-height:1;white-space:nowrap;color:#1f1f1f;-webkit-text-stroke:0.2px currentColor;font-weight:bold;transform:scaleX(0.890);transform-origin:0 0;">OCL_Meter</div><div style="position:absolute;left:785.80px;top:652.00px;width:54.60px;height:2.00px;background:#2d5a4a;border-radius:1px"></div><div style="position:absolute;left:983.00px;top:644.50px;width:2.00px;height:2.00px;background:#333;border-radius:1px"></div><div style="position:absolute;left:986.30px;top:644.50px;width:2.00px;height:2.00px;background:#333;border-radius:1px"></div><div style="position:absolute;left:989.60px;top:644.50px;width:2.00px;height:2.00px;background:#333;border-radius:1px"></div><div style="position:absolute;left:1008.00px;top:644.50px;width:10.00px;height:1.20px;background:#333"></div><div style="position:absolute;left:1012.40px;top:640.00px;width:1.20px;height:10.00px;background:#333"></div><div style="position:absolute;left:0.00px;top:656.50px;width:1024.00px;height:20.50px;background:#f2f2f2"></div><div style="position:absolute;left:-1.50px;top:663.30px;font-family:'Liberation Sans',sans-serif;font-size:9.40px;line-height:1;white-space:nowrap;color:#444;-webkit-text-stroke:0.2px currentColor;">y</div><div style="position:absolute;left:19.90px;top:663.20px;width:11.60px;height:10.90px;border:1.2px solid #555;border-radius:1px;background:linear-gradient(#555,#555) 0 2px/100% 1px no-repeat"></div><div style="position:absolute;left:23.00px;top:667.00px;width:6.00px;height:6.00px;border-radius:50%;border:1.2px solid #555"></div><svg style="position:absolute;left:44px;top:662px" width="14" height="13" viewBox="0 0 14 13"><circle cx="7" cy="2.5" r="1.6" fill="none" stroke="#555" stroke-width="1"/><path d="M2 5h10M7 5v4l-3 3M7 9l3 3" stroke="#555" stroke-width="1.1" fill="none"/></svg><div style="position:absolute;left:59.10px;top:663.30px;font-family:'Liberation Sans',sans-serif;font-size:9.40px;line-height:1;white-space:nowrap;color:#444;-webkit-text-stroke:0.2px currentColor;transform:scaleX(0.846);transform-origin:0 0;">Accessibility: Unavailable</div><div style="position:absolute;left:949.50px;top:658.40px;width:27.00px;height:18.60px;background:#e1e1e1;border-radius:2px"></div><div style="position:absolute;left:958.50px;top:662.80px;width:9.80px;height:9.50px;border:1.2px solid #444;background:linear-gradient(#444,#444) 33% 0/1px 100% no-repeat,linear-gradient(#444,#444) 66% 0/1px 100% no-repeat,linear-gradient(#444,#444) 0 33%/100% 1px no-repeat,linear-gradient(#444,#444) 0 66%/100% 1px no-repeat"></div><div style="position:absolute;left:989.40px;top:662.80px;width:11.60px;height:9.50px;border:1.2px solid #444"></div><div style="position:absolute;left:992.00px;top:665.00px;width:6.50px;height:5.00px;border:1px solid #444"></div><div style="position:absolute;left:1018.00px;top:662.80px;width:12.00px;height:9.50px;border:1.2px solid #444;background:linear-gradient(#444,#444) 0 50%/100% 1px no-repeat"></div><div style="position:absolute;left:0.00px;top:677.00px;width:1024.00px;height:39.00px;background:linear-gradient(90deg,#dbe3ee 0%,#e4eaf2 40%,#e7ebf2 70%,#e2e8f0 100%)"></div><div style="position:absolute;left:0.00px;top:676.50px;width:1024.00px;height:1.00px;background:#d5dbe3"></div><div style="position:absolute;left:-3.00px;top:687.00px;width:10.30px;height:9.30px;background:#2b7fd6"></div><div style="position:absolute;left:-3.00px;top:697.60px;width:10.30px;height:9.30px;background:#2b7fd6"></div><div style="position:absolute;left:19.90px;top:685.30px;width:76.40px;height:23.20px;background:#f7f9fc;border-radius:12px;box-shadow:0 0 0 1px rgba(0,0,0,0.03)"></div><svg style="position:absolute;left:37px;top:691px" width="12" height="12" viewBox="0 0 12 12"><circle cx="5" cy="5" r="3.8" fill="none" stroke="#333" stroke-width="1.4"/><path d="M7.8 7.8L11 11" stroke="#333" stroke-width="1.6"/></svg><div style="position:absolute;left:52.50px;top:691.24px;font-family:'Liberation Sans',sans-serif;font-size:11.00px;line-height:1;white-space:nowrap;color:#333;-webkit-text-stroke:0.2px currentColor;transform:scaleX(0.798);transform-origin:0 0;">Search</div><div style="position:absolute;left:107.90px;top:686.00px;width:20.90px;height:20.90px;border-radius:50%;background:conic-gradient(from 30deg,#db4437 0 120deg,#0f9d58 120deg 240deg,#f4c20d 240deg 360deg)"></div><div style="position:absolute;left:113.20px;top:691.30px;width:10.30px;height:10.30px;border-radius:50%;background:#4285f4;border:2px solid #fff"></div><div style="position:absolute;left:121.00px;top:682.50px;width:11.00px;height:10.00px;border-radius:50%;background:#f1f1f1;border:1px solid #9a9a9a"></div><div style="position:absolute;left:115.50px;top:711.20px;width:4.00px;height:1.80px;background:#666;border-radius:1px"></div><div style="position:absolute;left:133.50px;top:691.24px;font-family:'Liberation Sans',sans-serif;font-size:11.00px;line-height:1;white-space:nowrap;color:#2a2a2a;-webkit-text-stroke:0.2px currentColor;transform:scaleX(0.857);transform-origin:0 0;">Edit &quot;Projects&quot; with Elen</div><div style="position:absolute;left:250.70px;top:688.60px;width:17.60px;height:15.90px;background:linear-gradient(#fbe08a,#f3c144);border-radius:1.5px"></div><div style="position:absolute;left:250.70px;top:687.00px;width:7.00px;height:3.00px;background:#e8b63a;border-radius:1.5px 1.5px 0 0"></div><div style="position:absolute;left:257.50px;top:711.20px;width:4.00px;height:1.80px;background:#666;border-radius:1px"></div><div style="position:absolute;left:275.00px;top:691.24px;font-family:'Liberation Sans',sans-serif;font-size:11.00px;line-height:1;white-space:nowrap;color:#2a2a2a;-webkit-text-stroke:0.2px currentColor;transform:scaleX(0.828);transform-origin:0 0;">NauResa.com</div><div style="position:absolute;left:348.30px;top:688.60px;width:18.90px;height:15.90px;background:linear-gradient(#fbe08a,#f3c144);border-radius:1.5px"></div><div style="position:absolute;left:348.30px;top:687.00px;width:7.00px;height:3.00px;background:#e8b63a;border-radius:1.5px 1.5px 0 0"></div><div style="position:absolute;left:355.75px;top:711.20px;width:4.00px;height:1.80px;background:#666;border-radius:1px"></div><div style="position:absolute;left:373.90px;top:691.24px;font-family:'Liberation Sans',sans-serif;font-size:11.00px;line-height:1;white-space:nowrap;color:#2a2a2a;-webkit-text-stroke:0.2px currentColor;transform:scaleX(0.799);transform-origin:0 0;">MA7_734_1</div><div style="position:absolute;left:437.00px;top:687.00px;width:19.20px;height:20.00px;border-radius:50%;background:radial-gradient(circle at 45% 40%,#bfe4f6 0 25%,#3a8fc0 45%,#1d5a8a 70%,#2b6a3a)"></div><div style="position:absolute;left:444.00px;top:696.00px;width:12.00px;height:10.00px;background:linear-gradient(45deg,transparent 40%,#5aa040 40% 60%,transparent 60%)"></div><div style="position:absolute;left:444.60px;top:711.20px;width:4.00px;height:1.80px;background:#666;border-radius:1px"></div><div style="position:absolute;left:462.20px;top:691.24px;font-family:'Liberation Sans',sans-serif;font-size:11.00px;line-height:1;white-space:nowrap;color:#2a2a2a;-webkit-text-stroke:0.2px currentColor;transform:scaleX(0.813);transform-origin:0 0;">Electrical Network KSA -</div><div style="position:absolute;left:578.40px;top:687.00px;width:18.90px;height:20.00px;background:linear-gradient(90deg,#1d6e3e,#21a366);border-radius:2px"></div><div style="position:absolute;left:578.40px;top:690.00px;width:10.60px;height:14.00px;background:#107c41;border-radius:1.5px"></div><div style="position:absolute;left:580.50px;top:692.22px;font-family:'Liberation Sans',sans-serif;font-size:8.00px;line-height:1;white-space:nowrap;color:#fff;-webkit-text-stroke:0.2px currentColor;font-weight:bold;">X</div><div style="position:absolute;left:585.90px;top:711.20px;width:4.00px;height:1.80px;background:#666;border-radius:1px"></div><div style="position:absolute;left:604.00px;top:691.24px;font-family:'Liberation Sans',sans-serif;font-size:11.00px;line-height:1;white-space:nowrap;color:#2a2a2a;-webkit-text-stroke:0.2px currentColor;transform:scaleX(0.808);transform-origin:0 0;">3_TPS_096 Recaptured /</div><div style="position:absolute;left:713.90px;top:681.00px;width:136.60px;height:31.60px;background:#f3f6fa;border-radius:5px;box-shadow:0 0 0 1px rgba(0,0,0,0.03)"></div><div style="position:absolute;left:720.00px;top:687.70px;width:18.70px;height:16.60px;background:linear-gradient(180deg,#e6f0f8 0%,#9cc4e0 40%,#4a7aa0 60%,#8aa890 100%);border:1px solid #6a7a8a"></div><div style="position:absolute;left:723.40px;top:710.00px;width:12.40px;height:2.50px;background:#1a6ccc;border-radius:1.5px"></div><div style="position:absolute;left:745.00px;top:691.24px;font-family:'Liberation Sans',sans-serif;font-size:11.00px;line-height:1;white-space:nowrap;color:#2a2a2a;-webkit-text-stroke:0.2px currentColor;transform:scaleX(0.809);transform-origin:0 0;">M_MA7_734_03M_01 - V</div><svg style="position:absolute;left:928px;top:693px" width="10" height="7" viewBox="0 0 10 7"><path d="M1 6l4-4.5L9 6" stroke="#333" stroke-width="1.3" fill="none"/></svg><svg style="position:absolute;left:953px;top:689px" width="13" height="13" viewBox="0 0 13 13"><path d="M4.5 1h4l4 7-2 3.5h-8L.5 8z" fill="#f4c20d"/><path d="M4.5 1l-4 7 2 3.5 4-7z" fill="#0f9d58"/><path d="M2.5 11.5h8l2-3.5h-8z" fill="#4285f4"/></svg><svg style="position:absolute;left:976px;top:689px" width="16" height="13" viewBox="0 0 16 13"><path d="M4 11h8.5a3 3 0 000-6 4.5 4.5 0 00-8.5-1A3.5 3.5 0 004 11z" fill="none" stroke="#333" stroke-width="1.3"/><path d="M2 1l12 11" stroke="#333" stroke-width="1.3"/></svg><svg style="position:absolute;left:1002px;top:689px" width="14" height="12" viewBox="0 0 14 12"><path d="M1 4.5a8.5 8.5 0 0112 0M3 7a5.5 5.5 0 018 0M5 9.3a2.5 2.5 0 014 0" stroke="#333" stroke-width="1.3" fill="none"/><circle cx="7" cy="11" r="1" fill="#333"/></svg><div style="position:absolute;left:778px;top:2px;width:260px;height:566px;border-radius:7px;box-shadow:-2px 6px 22px rgba(0,0,0,0.32),0 0 2px rgba(0,0,0,0.2)"></div><div style="position:absolute;left:755px;top:566px;width:290px;height:64px;background:linear-gradient(180deg,rgba(0,0,0,0.24) 0%,rgba(0,0,0,0.13) 35%,rgba(0,0,0,0.05) 70%,rgba(0,0,0,0) 100%);-webkit-mask-image:linear-gradient(90deg,transparent 0,#000 45px);mask-image:linear-gradient(90deg,transparent 0,#000 45px)"></div><div style="position:absolute;left:778.00px;top:1.50px;width:262.00px;height:566.20px;background:#f8fafc;border:1px solid #cfd3d8;border-radius:7px 0 0 7px"></div><div style="position:absolute;left:778.80px;top:2.30px;width:261.20px;height:21.90px;background:#ffffff;border-radius:7px 0 0 0"></div><div style="position:absolute;left:784.50px;top:7.30px;width:12.10px;height:10.90px;background:linear-gradient(180deg,#e5f2f0,#8fb0a8);border:1px solid #5e7f7a;border-radius:1px"></div><div style="position:absolute;left:787.00px;top:10.00px;width:7.00px;height:5.00px;background:#3a5a55;opacity:.6"></div><div style="position:absolute;left:799.70px;top:7.54px;font-family:'Liberation Sans',sans-serif;font-size:10.40px;line-height:1;white-space:nowrap;color:#1f1f1f;-webkit-text-stroke:0.2px currentColor;transform:scaleX(0.884);transform-origin:0 0;">M_MA7_734_03M_01 - Windows Photo Vie...</div><div style="position:absolute;left:1006.00px;top:11.50px;width:8.60px;height:1.20px;background:#333"></div><div style="position:absolute;left:778.80px;top:24.20px;width:261.20px;height:22.30px;background:linear-gradient(180deg,#f1f5fa 0%,#e6edf5 50%,#dae3ee 100%);border-top:1px solid #e2e8ef;border-bottom:1px solid #cdd6e0"></div><div style="position:absolute;left:793.00px;top:31.00px;font-family:'Liberation Sans',sans-serif;font-size:10.60px;line-height:1;white-space:nowrap;color:#30445a;-webkit-text-stroke:0.2px currentColor;transform:scaleX(0.820);transform-origin:0 0;">File</div><div style="position:absolute;left:819.6px;top:35px;width:0;height:0;border-left:2.6px solid transparent;border-right:2.6px solid transparent;border-top:3.5px solid #1e2a36"></div><div style="position:absolute;left:839.00px;top:31.00px;font-family:'Liberation Sans',sans-serif;font-size:10.60px;line-height:1;white-space:nowrap;color:#30445a;-webkit-text-stroke:0.2px currentColor;transform:scaleX(0.885);transform-origin:0 0;">Print</div><div style="position:absolute;left:868.5px;top:35px;width:0;height:0;border-left:2.6px solid transparent;border-right:2.6px solid transparent;border-top:3.5px solid #1e2a36"></div><div style="position:absolute;left:888.00px;top:31.00px;font-family:'Liberation Sans',sans-serif;font-size:10.60px;line-height:1;white-space:nowrap;color:#30445a;-webkit-text-stroke:0.2px currentColor;transform:scaleX(0.882);transform-origin:0 0;">E-mail</div><div style="position:absolute;left:935.80px;top:31.00px;font-family:'Liberation Sans',sans-serif;font-size:10.60px;line-height:1;white-space:nowrap;color:#30445a;-webkit-text-stroke:0.2px currentColor;transform:scaleX(0.866);transform-origin:0 0;">Burn</div><div style="position:absolute;left:964.9px;top:35px;width:0;height:0;border-left:2.6px solid transparent;border-right:2.6px solid transparent;border-top:3.5px solid #1e2a36"></div><div style="position:absolute;left:982.30px;top:31.00px;font-family:'Liberation Sans',sans-serif;font-size:10.60px;line-height:1;white-space:nowrap;color:#30445a;-webkit-text-stroke:0.2px currentColor;transform:scaleX(0.872);transform-origin:0 0;">Open</div><div style="position:absolute;left:1012.9px;top:35px;width:0;height:0;border-left:2.6px solid transparent;border-right:2.6px solid transparent;border-top:3.5px solid #1e2a36"></div><div style="position:absolute;left:833.00px;top:29.00px;width:1.00px;height:13.00px;background:linear-gradient(#e6ecf2,#d6dde6,#e6ecf2)"></div><div style="position:absolute;left:877.00px;top:29.00px;width:1.00px;height:13.00px;background:linear-gradient(#e6ecf2,#d6dde6,#e6ecf2)"></div><div style="position:absolute;left:925.00px;top:29.00px;width:1.00px;height:13.00px;background:linear-gradient(#e6ecf2,#d6dde6,#e6ecf2)"></div><div style="position:absolute;left:973.00px;top:29.00px;width:1.00px;height:13.00px;background:linear-gradient(#e6ecf2,#d6dde6,#e6ecf2)"></div><div style="position:absolute;left:778.80px;top:46.50px;width:12.20px;height:474.50px;background:#f7f9fb"></div><div style="position:absolute;left:791px;top:48px;width:233px;height:473px;overflow:hidden;background:#4a453f"><div style="position:absolute;left:0;top:0;width:233px;height:473px;filter:blur(0.55px)"><div style="position:absolute;left:0.0px;top:0.0px;width:233.0px;height:473.0px;background:#46423c"></div><div style="position:absolute;left:39.0px;top:0.0px;width:194.0px;height:60.0px;background:linear-gradient(90deg,#48443d 0%,#4d4840 40%,#4a453d 100%)"></div><div style="position:absolute;left:39.0px;top:0.0px;width:26.0px;height:60.0px;background:#423e38"></div><div style="position:absolute;left:0.0px;top:0.0px;width:20.0px;height:52.0px;background:#4a4640"></div><div style="position:absolute;left:0.0px;top:51.0px;width:20.0px;height:371.0px;background:linear-gradient(90deg,#363431,#3e3d3a)"></div><div style="position:absolute;left:0.0px;top:52.0px;width:17.0px;height:35.0px;background:#2f2e2c"></div><div style="position:absolute;left:20.0px;top:0.0px;width:18.0px;height:422.0px;background:linear-gradient(90deg,#6a6760 0%,#55524c 18%,#34322e 40%,#2f2d2a 60%,#4e4b45 85%,#66635c 100%)"></div><div style="position:absolute;left:17.0px;top:282.0px;width:22.0px;height:140.0px;background:linear-gradient(180deg,rgba(62,62,61,0) 0%,rgba(62,62,61,0.85) 45%,#3e3e3d 100%)"></div><div style="position:absolute;left:0.0px;top:128.0px;width:39.0px;height:15.0px;background:linear-gradient(180deg,#5a5852,#4a4844 50%,#3a3835)"></div><div style="position:absolute;left:0.0px;top:248.0px;width:39.0px;height:15.0px;background:linear-gradient(180deg,#5a5852,#4a4844 50%,#3a3835)"></div><div style="position:absolute;left:27.0px;top:132.0px;width:8.0px;height:8.0px;background:radial-gradient(circle,#76736c 35%,transparent 65%)"></div><div style="position:absolute;left:27.0px;top:252.0px;width:8.0px;height:8.0px;background:radial-gradient(circle,#76736c 35%,transparent 65%)"></div><div style="position:absolute;left:0.0px;top:60.0px;width:69.0px;height:15.0px;background:linear-gradient(180deg,#5c5a55,#4a4844 60%,#3c3a36)"></div><div style="position:absolute;left:39.0px;top:58.0px;width:194.0px;height:10.0px;background:linear-gradient(180deg,#46423b,#3a3731 60%,#45413a)"></div><div style="position:absolute;left:22.0px;top:61.0px;width:12.0px;height:11.0px;background:radial-gradient(circle,#7a7772 30%,#55534e 60%,transparent 70%)"></div><div style="position:absolute;left:39.0px;top:68.0px;width:194.0px;height:346.0px;background:#bdbdbb;border-radius:9px 0 0 3px"></div><div style="position:absolute;left:39.0px;top:68.0px;width:194.0px;height:124.0px;background:linear-gradient(180deg,#cacac8 0%,#c2c2c0 30%,#bebebc 100%);border-radius:9px 0 0 0"></div><div style="position:absolute;left:40.0px;top:76.0px;width:17.0px;height:114.0px;background:linear-gradient(90deg,#c5c5c3,#dadad8 60%,#c9c9c7)"></div><div style="position:absolute;left:33.0px;top:89.0px;width:18px;height:13px;transform:rotate(-35deg);transform-origin:0 0;background:#7e7e7c;border:1px solid #4a4a48;border-radius:3px"></div><div style="position:absolute;left:43.0px;top:78.0px;width:14.0px;height:10.0px;background:#3d3c3a;border-radius:50%;opacity:.85"></div><div style="position:absolute;left:71.0px;top:73.0px;width:7.0px;height:10.0px;border:1.4px solid #333;border-radius:50%"></div><div style="position:absolute;left:81.0px;top:73.0px;white-space:nowrap;line-height:1;font-family:Liberation Sans,sans-serif;font-size:10px;color:#333;opacity:0.8;transform:scale(0.6);transform-origin:0 0;font-weight:bold;">~~~~~~~</div><div style="position:absolute;left:81.0px;top:78.0px;white-space:nowrap;line-height:1;font-family:Liberation Sans,sans-serif;font-size:10px;color:#333;opacity:0.85;transform:scale(0.62);transform-origin:0 0;font-weight:bold;">energy</div><div style="position:absolute;left:115.0px;top:75.5px;white-space:nowrap;line-height:1;font-family:Liberation Sans,sans-serif;font-size:10px;color:#333;opacity:0.75;transform:scale(0.52);transform-origin:0 0;">TYPE: CP5-1 ~~~ CP4 CM4-A1</div><div style="position:absolute;left:60.0px;top:86.0px;width:7.0px;height:8.0px;border:1.2px solid #444"></div><div style="position:absolute;left:58.0px;top:98.0px;width:10.0px;height:4.0px;background:#555;opacity:.7"></div><div style="position:absolute;left:59.0px;top:107.0px;width:8.0px;height:5.0px;background:#555;opacity:.65"></div><div style="position:absolute;left:59.0px;top:117.0px;width:8.0px;height:4.0px;background:#555;opacity:.6"></div><div style="position:absolute;left:59.0px;top:126.0px;width:11.0px;height:6.0px;background:repeating-linear-gradient(180deg,#555 0 1px,transparent 1px 2px);opacity:.8"></div><div style="position:absolute;left:79.0px;top:90.0px;width:94.0px;height:29.5px;background:linear-gradient(180deg,#565a48,#62664f 50%,#585c4a);border:1px solid #3a3d32;border-radius:2px"></div><div style="position:absolute;left:95px;top:99px;white-space:nowrap;line-height:1;font-family:'Liberation Sans',sans-serif;font-size:13px;font-weight:bold;color:#34382c;font-style:italic;letter-spacing:0.3px;opacity:.75">00000326</div><div style="position:absolute;left:195.5px;top:84.5px;width:17.0px;height:17.5px;background:linear-gradient(135deg,#d0d0ce,#b8b8b6);border:1px solid #8d8d8b;border-radius:2px"></div><div style="position:absolute;left:195.5px;top:109.0px;width:17.0px;height:17.5px;background:linear-gradient(135deg,#d0d0ce,#b8b8b6);border:1px solid #8d8d8b;border-radius:2px"></div><div style="position:absolute;left:197.0px;top:79.0px;width:12.0px;height:3.0px;background:#555;opacity:.45"></div><div style="position:absolute;left:196.0px;top:127.5px;width:16.0px;height:3.0px;background:#444;opacity:.5"></div><div style="position:absolute;left:86.0px;top:127.0px;white-space:nowrap;line-height:1;font-family:Liberation Sans,sans-serif;font-size:10px;color:#1e1e1e;opacity:0.9;transform:scale(0.44);transform-origin:0 0;font-weight:bold;">Imp/kWh &nbsp;Imp/kvarh &nbsp;Power &nbsp; Apprx</div><div style="position:absolute;left:92.5px;top:132.6px;width:5.6px;height:5.6px;background:#1e1e1e;border-radius:50%"></div><div style="position:absolute;left:113.0px;top:132.6px;width:5.6px;height:5.6px;background:#1e1e1e;border-radius:50%"></div><div style="position:absolute;left:133.0px;top:132.6px;width:5.6px;height:5.6px;background:#1e1e1e;border-radius:50%"></div><div style="position:absolute;left:153.2px;top:132.6px;width:5.6px;height:5.6px;background:#1e1e1e;border-radius:50%"></div><div style="position:absolute;left:163.0px;top:128.0px;width:14.0px;height:6.0px;background:#2a2a2a;opacity:.75;border-radius:40% 60% 40% 60%"></div><div style="position:absolute;left:185.5px;top:135.4px;width:37.5px;height:37.2px;background:#cdcdcb;border:1.2px solid #a2a2a0;border-radius:50%;box-shadow:0 0 0 1px rgba(255,255,255,0.25)"></div><div style="position:absolute;left:197.4px;top:151.0px;width:13.6px;height:6.0px;background:#1a1a1a;border-radius:3px"></div><div style="position:absolute;left:170.0px;top:149.5px;width:9.0px;height:8.0px;border:1px solid #444"></div><div style="position:absolute;left:61.0px;top:141.5px;white-space:nowrap;line-height:1;font-family:Liberation Sans,sans-serif;font-size:10px;color:#1e1e1e;opacity:0.9;transform:scale(0.4);transform-origin:0 0;font-weight:bold;">ST1003DBR</div><div style="position:absolute;left:61.0px;top:146.5px;white-space:nowrap;line-height:1;font-family:Liberation Sans,sans-serif;font-size:10px;color:#1e1e1e;opacity:0.9;transform:scale(0.4);transform-origin:0 0;font-weight:bold;">SYS/KW4W</div><div style="position:absolute;left:61.0px;top:151.5px;white-space:nowrap;line-height:1;font-family:Liberation Sans,sans-serif;font-size:10px;color:#1e1e1e;opacity:0.9;transform:scale(0.4);transform-origin:0 0;font-weight:bold;">3x230/400V  50Hz</div><div style="position:absolute;left:61.0px;top:156.5px;white-space:nowrap;line-height:1;font-family:Liberation Sans,sans-serif;font-size:10px;color:#1e1e1e;opacity:0.9;transform:scale(0.4);transform-origin:0 0;font-weight:bold;">Active CL 1.0</div><div style="position:absolute;left:61.0px;top:161.5px;white-space:nowrap;line-height:1;font-family:Liberation Sans,sans-serif;font-size:10px;color:#1e1e1e;opacity:0.9;transform:scale(0.4);transform-origin:0 0;font-weight:bold;">Reactive CL 2.0</div><div style="position:absolute;left:61.0px;top:166.5px;white-space:nowrap;line-height:1;font-family:Liberation Sans,sans-serif;font-size:10px;color:#1e1e1e;opacity:0.9;transform:scale(0.4);transform-origin:0 0;font-weight:bold;">1000imp/kWh</div><div style="position:absolute;left:61.0px;top:171.5px;white-space:nowrap;line-height:1;font-family:Liberation Sans,sans-serif;font-size:10px;color:#1e1e1e;opacity:0.9;transform:scale(0.4);transform-origin:0 0;font-weight:bold;">1000imp/kvarh</div><div style="position:absolute;left:96.0px;top:141.5px;white-space:nowrap;line-height:1;font-family:Liberation Sans,sans-serif;font-size:10px;color:#2a2a2a;opacity:0.75;transform:scale(0.42);transform-origin:0 0;font-weight:bold;">~~~~~ ~~~~~ ~~</div><div style="position:absolute;left:96.0px;top:146.5px;white-space:nowrap;line-height:1;font-family:Liberation Sans,sans-serif;font-size:10px;color:#2a2a2a;opacity:0.75;transform:scale(0.42);transform-origin:0 0;font-weight:bold;">~~~~~ ~~~~~ ~~</div><div style="position:absolute;left:96.0px;top:151.5px;white-space:nowrap;line-height:1;font-family:Liberation Sans,sans-serif;font-size:10px;color:#2a2a2a;opacity:0.75;transform:scale(0.42);transform-origin:0 0;font-weight:bold;">~~~~~ ~~~~~ ~~</div><div style="position:absolute;left:96.0px;top:156.5px;white-space:nowrap;line-height:1;font-family:Liberation Sans,sans-serif;font-size:10px;color:#2a2a2a;opacity:0.75;transform:scale(0.42);transform-origin:0 0;font-weight:bold;">~~~~~ ~~~~~ ~~</div><div style="position:absolute;left:96.0px;top:161.5px;white-space:nowrap;line-height:1;font-family:Liberation Sans,sans-serif;font-size:10px;color:#2a2a2a;opacity:0.75;transform:scale(0.42);transform-origin:0 0;font-weight:bold;">~~~~~ ~~~~~ ~~</div><div style="position:absolute;left:96.0px;top:166.5px;white-space:nowrap;line-height:1;font-family:Liberation Sans,sans-serif;font-size:10px;color:#2a2a2a;opacity:0.75;transform:scale(0.42);transform-origin:0 0;font-weight:bold;">~~~~~ ~~~~~ ~~</div><div style="position:absolute;left:96.0px;top:171.5px;white-space:nowrap;line-height:1;font-family:Liberation Sans,sans-serif;font-size:10px;color:#2a2a2a;opacity:0.75;transform:scale(0.42);transform-origin:0 0;font-weight:bold;">~~~~~ ~~~~~ ~~</div><div style="position:absolute;left:133.0px;top:141.5px;white-space:nowrap;line-height:1;font-family:Liberation Sans,sans-serif;font-size:10px;color:#1e1e1e;opacity:0.85;transform:scale(0.4);transform-origin:0 0;font-weight:bold;">IEC 62053-11</div><div style="position:absolute;left:133.0px;top:151.5px;white-space:nowrap;line-height:1;font-family:Liberation Sans,sans-serif;font-size:10px;color:#1e1e1e;opacity:0.85;transform:scale(0.4);transform-origin:0 0;font-weight:bold;">IEC 62053-21</div><div style="position:absolute;left:133.0px;top:161.5px;white-space:nowrap;line-height:1;font-family:Liberation Sans,sans-serif;font-size:10px;color:#1e1e1e;opacity:0.85;transform:scale(0.4);transform-origin:0 0;font-weight:bold;">IEC 62053-23</div><div style="position:absolute;left:133.0px;top:166.5px;white-space:nowrap;line-height:1;font-family:Liberation Sans,sans-serif;font-size:10px;color:#1e1e1e;opacity:0.85;transform:scale(0.4);transform-origin:0 0;font-weight:bold;">Assembled by Energy Dev</div><div style="position:absolute;left:133.0px;top:171.5px;white-space:nowrap;line-height:1;font-family:Liberation Sans,sans-serif;font-size:10px;color:#1e1e1e;opacity:0.85;transform:scale(0.4);transform-origin:0 0;font-weight:bold;">Designed by Linear</div><div style="position:absolute;left:61.0px;top:177.5px;white-space:nowrap;line-height:1;font-family:Liberation Sans,sans-serif;font-size:10px;color:#222;opacity:0.85;transform:scale(0.42);transform-origin:0 0;font-weight:bold;">Three Phase Four Wires Smart Energy Meter</div><div style="position:absolute;left:61.0px;top:182.5px;white-space:nowrap;line-height:1;font-family:Liberation Sans,sans-serif;font-size:10px;color:#2a2a2a;opacity:0.75;transform:scale(0.42);transform-origin:0 0;">NBSS-RSM ~~~ ~~~~~ ~~~~~ ~~~~~~ ~~~~</div><div style="position:absolute;left:155.0px;top:180.5px;white-space:nowrap;line-height:1;font-family:Liberation Sans,sans-serif;font-size:10px;color:#2a2a2a;opacity:0.75;transform:scale(0.42);transform-origin:0 0;">Serial No:</div><div style="position:absolute;left:181.8px;top:178.4px;width:45.9px;height:7.8px;background:repeating-linear-gradient(90deg,#2a2a2a 0 1px,#c8c8c6 1px 2px,#2a2a2a 2px 3.5px,#c8c8c6 3.5px 5px)"></div><div style="position:absolute;left:183.0px;top:187.0px;width:44.0px;height:3.0px;background:#555;opacity:.45"></div><div style="position:absolute;left:39.0px;top:190.0px;width:194.0px;height:3.5px;background:#8e8e8c"></div><div style="position:absolute;left:39.0px;top:193.0px;width:22.0px;height:71.0px;background:linear-gradient(90deg,#a5a5a3,#c8c8c6 40%,#b0b0ae)"></div><div style="position:absolute;left:40.0px;top:218.0px;width:18.0px;height:20.0px;background:#dcdcda;border:1px solid #9a9a98"></div><div style="position:absolute;left:41.0px;top:196.0px;width:18.0px;height:18.0px;background:#bdbdbb;border:1px solid #9a9a98"></div><div style="position:absolute;left:61.0px;top:193.0px;width:166.0px;height:71.0px;background:#b0b0ae"></div><div style="position:absolute;left:64.0px;top:196.0px;width:161.0px;height:65.0px;background:#c6c6c4;border:1px solid #8f8f8d"></div><div style="position:absolute;left:69.0px;top:204.5px;width:62.0px;height:0.7px;background:#6a6a68;opacity:.45"></div><div style="position:absolute;left:69.0px;top:208.8px;width:62.0px;height:0.7px;background:#6a6a68;opacity:.45"></div><div style="position:absolute;left:69.0px;top:213.1px;width:62.0px;height:0.7px;background:#6a6a68;opacity:.45"></div><div style="position:absolute;left:69.0px;top:217.4px;width:62.0px;height:0.7px;background:#6a6a68;opacity:.45"></div><div style="position:absolute;left:69.0px;top:221.7px;width:62.0px;height:0.7px;background:#6a6a68;opacity:.45"></div><div style="position:absolute;left:69.0px;top:226.0px;width:62.0px;height:0.7px;background:#6a6a68;opacity:.45"></div><div style="position:absolute;left:69.0px;top:230.3px;width:62.0px;height:0.7px;background:#6a6a68;opacity:.45"></div><div style="position:absolute;left:69.0px;top:234.6px;width:62.0px;height:0.7px;background:#6a6a68;opacity:.45"></div><div style="position:absolute;left:69.0px;top:238.9px;width:62.0px;height:0.7px;background:#6a6a68;opacity:.45"></div><div style="position:absolute;left:69.0px;top:243.2px;width:62.0px;height:0.7px;background:#6a6a68;opacity:.45"></div><div style="position:absolute;left:69.0px;top:247.5px;width:62.0px;height:0.7px;background:#6a6a68;opacity:.45"></div><div style="position:absolute;left:69.0px;top:251.8px;width:62.0px;height:0.7px;background:#6a6a68;opacity:.45"></div><div style="position:absolute;left:131.0px;top:204.5px;width:63.0px;height:0.7px;background:#6a6a68;opacity:.4"></div><div style="position:absolute;left:131.0px;top:208.8px;width:63.0px;height:0.7px;background:#6a6a68;opacity:.4"></div><div style="position:absolute;left:131.0px;top:213.1px;width:63.0px;height:0.7px;background:#6a6a68;opacity:.4"></div><div style="position:absolute;left:131.0px;top:217.4px;width:63.0px;height:0.7px;background:#6a6a68;opacity:.4"></div><div style="position:absolute;left:131.0px;top:221.7px;width:63.0px;height:0.7px;background:#6a6a68;opacity:.4"></div><div style="position:absolute;left:194.0px;top:204.5px;width:23.0px;height:0.7px;background:#6a6a68;opacity:.45"></div><div style="position:absolute;left:194.0px;top:208.8px;width:23.0px;height:0.7px;background:#6a6a68;opacity:.45"></div><div style="position:absolute;left:194.0px;top:213.1px;width:23.0px;height:0.7px;background:#6a6a68;opacity:.45"></div><div style="position:absolute;left:194.0px;top:217.4px;width:23.0px;height:0.7px;background:#6a6a68;opacity:.45"></div><div style="position:absolute;left:194.0px;top:221.7px;width:23.0px;height:0.7px;background:#6a6a68;opacity:.45"></div><div style="position:absolute;left:194.0px;top:226.0px;width:23.0px;height:0.7px;background:#6a6a68;opacity:.45"></div><div style="position:absolute;left:194.0px;top:230.3px;width:23.0px;height:0.7px;background:#6a6a68;opacity:.45"></div><div style="position:absolute;left:194.0px;top:234.6px;width:23.0px;height:0.7px;background:#6a6a68;opacity:.45"></div><div style="position:absolute;left:194.0px;top:238.9px;width:23.0px;height:0.7px;background:#6a6a68;opacity:.45"></div><div style="position:absolute;left:69.0px;top:200.6px;width:148.0px;height:56.1px;border:0.8px solid #6a6a68;opacity:.6"></div><div style="position:absolute;left:73.0px;top:200.6px;width:0.8px;height:56.1px;background:#6a6a68;opacity:.45"></div><div style="position:absolute;left:79.0px;top:200.6px;width:0.8px;height:56.1px;background:#6a6a68;opacity:.45"></div><div style="position:absolute;left:85.0px;top:200.6px;width:0.8px;height:56.1px;background:#6a6a68;opacity:.45"></div><div style="position:absolute;left:131.0px;top:200.6px;width:0.8px;height:56.1px;background:#6a6a68;opacity:.45"></div><div style="position:absolute;left:137.0px;top:200.6px;width:0.8px;height:56.1px;background:#6a6a68;opacity:.45"></div><div style="position:absolute;left:194.0px;top:200.6px;width:0.8px;height:56.1px;background:#6a6a68;opacity:.45"></div><div style="position:absolute;left:204.0px;top:200.6px;width:0.8px;height:56.1px;background:#6a6a68;opacity:.45"></div><div style="position:absolute;left:217.0px;top:200.6px;width:0.8px;height:56.1px;background:#6a6a68;opacity:.45"></div><div style="position:absolute;left:91.0px;top:200.8px;white-space:nowrap;line-height:1;font-family:Liberation Sans,sans-serif;font-size:10px;color:#2a2a2a;opacity:0.85;transform:scale(0.42);transform-origin:0 0;font-weight:bold;">Group 1</div><div style="position:absolute;left:153.0px;top:200.8px;white-space:nowrap;line-height:1;font-family:Liberation Sans,sans-serif;font-size:10px;color:#2a2a2a;opacity:0.85;transform:scale(0.42);transform-origin:0 0;font-weight:bold;">Group 2</div><div style="position:absolute;left:197.0px;top:200.8px;white-space:nowrap;line-height:1;font-family:Liberation Sans,sans-serif;font-size:10px;color:#2a2a2a;opacity:0.85;transform:scale(0.42);transform-origin:0 0;font-weight:bold;">Group 3</div><div style="position:absolute;left:87.0px;top:205.0px;white-space:nowrap;line-height:1;font-family:Liberation Sans,sans-serif;font-size:10px;color:#333;opacity:0.75;transform:scale(0.42);transform-origin:0 0;">Active Power</div><div style="position:absolute;left:87.0px;top:209.3px;white-space:nowrap;line-height:1;font-family:Liberation Sans,sans-serif;font-size:10px;color:#333;opacity:0.75;transform:scale(0.42);transform-origin:0 0;">Active Tariff</div><div style="position:absolute;left:87.0px;top:213.6px;white-space:nowrap;line-height:1;font-family:Liberation Sans,sans-serif;font-size:10px;color:#333;opacity:0.75;transform:scale(0.42);transform-origin:0 0;">Reactive Power</div><div style="position:absolute;left:87.0px;top:217.9px;white-space:nowrap;line-height:1;font-family:Liberation Sans,sans-serif;font-size:10px;color:#333;opacity:0.75;transform:scale(0.42);transform-origin:0 0;">Reactive Power</div><div style="position:absolute;left:87.0px;top:222.2px;white-space:nowrap;line-height:1;font-family:Liberation Sans,sans-serif;font-size:10px;color:#333;opacity:0.75;transform:scale(0.42);transform-origin:0 0;">Apparent Power</div><div style="position:absolute;left:87.0px;top:226.5px;white-space:nowrap;line-height:1;font-family:Liberation Sans,sans-serif;font-size:10px;color:#333;opacity:0.75;transform:scale(0.42);transform-origin:0 0;">Reactive Power</div><div style="position:absolute;left:87.0px;top:230.8px;white-space:nowrap;line-height:1;font-family:Liberation Sans,sans-serif;font-size:10px;color:#333;opacity:0.75;transform:scale(0.42);transform-origin:0 0;">Reactive Power</div><div style="position:absolute;left:87.0px;top:235.1px;white-space:nowrap;line-height:1;font-family:Liberation Sans,sans-serif;font-size:10px;color:#333;opacity:0.75;transform:scale(0.42);transform-origin:0 0;">Max Demand</div><div style="position:absolute;left:87.0px;top:239.4px;white-space:nowrap;line-height:1;font-family:Liberation Sans,sans-serif;font-size:10px;color:#333;opacity:0.75;transform:scale(0.42);transform-origin:0 0;">Apparent Power</div><div style="position:absolute;left:87.0px;top:243.7px;white-space:nowrap;line-height:1;font-family:Liberation Sans,sans-serif;font-size:10px;color:#333;opacity:0.75;transform:scale(0.42);transform-origin:0 0;">Power Factor</div><div style="position:absolute;left:87.0px;top:248.0px;white-space:nowrap;line-height:1;font-family:Liberation Sans,sans-serif;font-size:10px;color:#333;opacity:0.75;transform:scale(0.42);transform-origin:0 0;">Energy Register</div><div style="position:absolute;left:139.0px;top:205.0px;white-space:nowrap;line-height:1;font-family:Liberation Sans,sans-serif;font-size:10px;color:#333;opacity:0.75;transform:scale(0.42);transform-origin:0 0;">Billing period Energy</div><div style="position:absolute;left:139.0px;top:209.3px;white-space:nowrap;line-height:1;font-family:Liberation Sans,sans-serif;font-size:10px;color:#333;opacity:0.75;transform:scale(0.42);transform-origin:0 0;">Current Energy</div><div style="position:absolute;left:139.0px;top:213.6px;white-space:nowrap;line-height:1;font-family:Liberation Sans,sans-serif;font-size:10px;color:#333;opacity:0.75;transform:scale(0.42);transform-origin:0 0;">Meter Info</div><div style="position:absolute;left:139.0px;top:217.9px;white-space:nowrap;line-height:1;font-family:Liberation Sans,sans-serif;font-size:10px;color:#333;opacity:0.75;transform:scale(0.42);transform-origin:0 0;">Communication Parms</div><div style="position:absolute;left:139.0px;top:222.2px;white-space:nowrap;line-height:1;font-family:Liberation Sans,sans-serif;font-size:10px;color:#333;opacity:0.75;transform:scale(0.42);transform-origin:0 0;">Time Register</div><div style="position:absolute;left:206.0px;top:205.0px;white-space:nowrap;line-height:1;font-family:Liberation Sans,sans-serif;font-size:10px;color:#333;opacity:0.75;transform:scale(0.42);transform-origin:0 0;">kWh</div><div style="position:absolute;left:206.0px;top:209.3px;white-space:nowrap;line-height:1;font-family:Liberation Sans,sans-serif;font-size:10px;color:#333;opacity:0.75;transform:scale(0.42);transform-origin:0 0;">kWh</div><div style="position:absolute;left:206.0px;top:213.6px;white-space:nowrap;line-height:1;font-family:Liberation Sans,sans-serif;font-size:10px;color:#333;opacity:0.75;transform:scale(0.42);transform-origin:0 0;">kWh</div><div style="position:absolute;left:206.0px;top:217.9px;white-space:nowrap;line-height:1;font-family:Liberation Sans,sans-serif;font-size:10px;color:#333;opacity:0.75;transform:scale(0.42);transform-origin:0 0;">kWh</div><div style="position:absolute;left:206.0px;top:222.2px;white-space:nowrap;line-height:1;font-family:Liberation Sans,sans-serif;font-size:10px;color:#333;opacity:0.75;transform:scale(0.42);transform-origin:0 0;">kWh</div><div style="position:absolute;left:206.0px;top:226.5px;white-space:nowrap;line-height:1;font-family:Liberation Sans,sans-serif;font-size:10px;color:#333;opacity:0.75;transform:scale(0.42);transform-origin:0 0;">kWh</div><div style="position:absolute;left:206.0px;top:230.8px;white-space:nowrap;line-height:1;font-family:Liberation Sans,sans-serif;font-size:10px;color:#333;opacity:0.75;transform:scale(0.42);transform-origin:0 0;">kWh</div><div style="position:absolute;left:206.0px;top:235.1px;white-space:nowrap;line-height:1;font-family:Liberation Sans,sans-serif;font-size:10px;color:#333;opacity:0.75;transform:scale(0.42);transform-origin:0 0;">kWh</div><div style="position:absolute;left:206.0px;top:239.4px;white-space:nowrap;line-height:1;font-family:Liberation Sans,sans-serif;font-size:10px;color:#333;opacity:0.75;transform:scale(0.42);transform-origin:0 0;">kWh</div><div style="position:absolute;left:131.0px;top:232.0px;white-space:nowrap;line-height:1;font-family:Liberation Sans,sans-serif;font-size:10px;color:#333;opacity:0.75;transform:scale(0.42);transform-origin:0 0;">IEC Sp ~~ ~~~~~~~</div><div style="position:absolute;left:131.0px;top:239.0px;white-space:nowrap;line-height:1;font-family:Liberation Sans,sans-serif;font-size:10px;color:#333;opacity:0.75;transform:scale(0.42);transform-origin:0 0;">IEC ~~~~~~ ~~ ~~~~~~~</div><div style="position:absolute;left:175.0px;top:234.0px;width:18.0px;height:14.0px;border:0.8px solid #555;opacity:.7"></div><div style="position:absolute;left:131.0px;top:247.0px;width:12.0px;height:8.0px;border:1px solid #666;border-radius:50%;border-right-color:transparent;opacity:.6"></div><div style="position:absolute;left:145.0px;top:249.0px;white-space:nowrap;line-height:1;font-family:Liberation Sans,sans-serif;font-size:10px;color:#333;opacity:0.6;transform:scale(0.42);transform-origin:0 0;">www.energy.sa</div><div style="position:absolute;left:175.0px;top:252.0px;white-space:nowrap;line-height:1;font-family:Liberation Sans,sans-serif;font-size:10px;color:#333;opacity:0.6;transform:scale(0.42);transform-origin:0 0;">Saudi Electricity Co</div><div style="position:absolute;left:227.0px;top:193.0px;width:6.0px;height:89.0px;background:#b9b9b7"></div><div style="position:absolute;left:39.0px;top:264.0px;width:194.0px;height:12.0px;background:#c4c4c2"></div><div style="position:absolute;left:75.0px;top:267.5px;white-space:nowrap;line-height:1;font-family:Liberation Sans,sans-serif;font-size:10px;color:#333;opacity:0.75;transform:scale(0.45);transform-origin:0 0;">Assembled in KSA 2020</div><div style="position:absolute;left:171.0px;top:267.5px;white-space:nowrap;line-height:1;font-family:Liberation Sans,sans-serif;font-size:10px;color:#333;opacity:0.6;transform:scale(0.45);transform-origin:0 0;">Saudi Electricity</div><div style="position:absolute;left:39.0px;top:275.0px;width:194.0px;height:2.0px;background:#a2a2a0"></div><div style="position:absolute;left:38.5px;top:277.0px;width:188.5px;height:137.0px;background:linear-gradient(180deg,#c4c4c6 0%,#bdbdbf 40%,#b7b7b9 100%)"></div><div style="position:absolute;left:227.0px;top:277.0px;width:6.0px;height:137.0px;background:linear-gradient(90deg,#8a8a8a,#b0b0b0)"></div><div style="position:absolute;left:228.0px;top:290.0px;width:5.0px;height:82.0px;background:#4a4a48"></div><div style="position:absolute;left:95.0px;top:288.0px;width:74px;height:25px;transform:rotate(-10deg);transform-origin:0 0;background:#d2d2d0;box-shadow:0 0 1px #888"></div><div style="position:absolute;left:101.0px;top:293.0px;width:44px;height:10px;transform:rotate(-10deg);transform-origin:0 0;background:repeating-linear-gradient(90deg,#1e1e1e 0 1px,#d2d2d0 1px 2px,#1e1e1e 2px 3.5px,#d2d2d0 3.5px 5px)"></div><div style="position:absolute;left:102.0px;top:304.0px;width:42px;height:3px;transform:rotate(-10deg);transform-origin:0 0;background:#555;opacity:.5"></div><div style="position:absolute;left:149.0px;top:285.0px;width:15px;height:15px;transform:rotate(-10deg);transform-origin:0 0;background:repeating-conic-gradient(#1a1a1a 0 25%,#d2d2d0 0 50%) 0 0/5px 5px"></div><div style="position:absolute;left:92.5px;top:316.0px;width:102.5px;height:54.7px;border:1px dashed #555;opacity:.8"></div><div style="position:absolute;left:106.0px;top:322.0px;width:7.0px;height:8.0px;border:1px solid #555;border-radius:50% 50% 0 0;opacity:.8"></div><div style="position:absolute;left:104.0px;top:335.0px;width:12.0px;height:6.0px;border:1px solid #555;opacity:.75"></div><div style="position:absolute;left:109.0px;top:330.0px;width:1.0px;height:5.0px;background:#555"></div><div style="position:absolute;left:109.0px;top:341.0px;width:1.0px;height:16.0px;background:#555;opacity:.7"></div><div style="position:absolute;left:121.0px;top:322.0px;width:7.0px;height:8.0px;border:1px solid #555;border-radius:50% 50% 0 0;opacity:.8"></div><div style="position:absolute;left:119.0px;top:335.0px;width:12.0px;height:6.0px;border:1px solid #555;opacity:.75"></div><div style="position:absolute;left:124.0px;top:330.0px;width:1.0px;height:5.0px;background:#555"></div><div style="position:absolute;left:124.0px;top:341.0px;width:1.0px;height:16.0px;background:#555;opacity:.7"></div><div style="position:absolute;left:136.0px;top:322.0px;width:7.0px;height:8.0px;border:1px solid #555;border-radius:50% 50% 0 0;opacity:.8"></div><div style="position:absolute;left:134.0px;top:335.0px;width:12.0px;height:6.0px;border:1px solid #555;opacity:.75"></div><div style="position:absolute;left:139.0px;top:330.0px;width:1.0px;height:5.0px;background:#555"></div><div style="position:absolute;left:139.0px;top:341.0px;width:1.0px;height:16.0px;background:#555;opacity:.7"></div><div style="position:absolute;left:151.0px;top:322.0px;width:7.0px;height:8.0px;border:1px solid #555;border-radius:50% 50% 0 0;opacity:.8"></div><div style="position:absolute;left:149.0px;top:335.0px;width:12.0px;height:6.0px;border:1px solid #555;opacity:.75"></div><div style="position:absolute;left:154.0px;top:330.0px;width:1.0px;height:5.0px;background:#555"></div><div style="position:absolute;left:154.0px;top:341.0px;width:1.0px;height:16.0px;background:#555;opacity:.7"></div><div style="position:absolute;left:166.0px;top:322.0px;width:25.0px;height:20.0px;border:1px solid #555;background:linear-gradient(#555,#555) 50% 0/1px 100% no-repeat,linear-gradient(#555,#555) 0 33%/100% 1px no-repeat,linear-gradient(#555,#555) 0 66%/100% 1px no-repeat;opacity:.8"></div><div style="position:absolute;left:99.0px;top:348.0px;width:90.0px;height:1.0px;background:#555;opacity:.8"></div><div style="position:absolute;left:99.0px;top:354.0px;width:90.0px;height:1.0px;background:#555;opacity:.7"></div><div style="position:absolute;left:99.0px;top:344.0px;width:2.0px;height:15.0px;background:#555;opacity:.7"></div><div style="position:absolute;left:177.0px;top:344.0px;width:2.0px;height:15.0px;background:#555;opacity:.7"></div><div style="position:absolute;left:129.0px;top:361.0px;width:25.0px;height:3.0px;background:#444;opacity:.55"></div><div style="position:absolute;left:129.0px;top:365.0px;width:25.0px;height:2.0px;background:#555;opacity:.4"></div><div style="position:absolute;left:33.0px;top:322.0px;width:28.0px;height:30.0px;background:linear-gradient(90deg,#a5a5a3,#cacac8 50%,#b8b8b6);border-radius:3px"></div><div style="position:absolute;left:42.0px;top:329.0px;width:14.0px;height:14.0px;background:radial-gradient(circle,#2a2a2a 30%,#777 45%,#c8c8c6 60%);border-radius:50%"></div><div style="position:absolute;left:27.0px;top:326.0px;width:8.0px;height:20.0px;background:#5a5854"></div><div style="position:absolute;left:33.0px;top:344.0px;width:14.0px;height:10.0px;background:#b0b0ae;border-radius:0 0 6px 6px"></div><div style="position:absolute;left:31.0px;top:340.0px;width:7px;height:82px;transform:rotate(20deg);transform-origin:0 0;background:linear-gradient(90deg,#2a2b22,#3e4030,#2a2b22)"></div><div style="position:absolute;left:24.0px;top:350.0px;width:13.0px;height:14.0px;background:radial-gradient(circle,#55534c 40%,transparent 70%)"></div><div style="position:absolute;left:0.0px;top:414.0px;width:233.0px;height:59.0px;background:linear-gradient(180deg,#3a393a,#3e3d3e 60%,#454446)"></div><div style="position:absolute;left:209.0px;top:414.0px;width:24.0px;height:59.0px;background:linear-gradient(90deg,#4a4a4c,#5e5e60)"></div><div style="position:absolute;left:0.0px;top:446.0px;width:31.0px;height:27.0px;background:linear-gradient(180deg,#8e8470,#a39a80)"></div><div style="position:absolute;left:31.0px;top:432.0px;width:16.0px;height:41.0px;background:#2e2d2c"></div><div style="position:absolute;left:47.0px;top:430.0px;width:42.0px;height:43.0px;background:linear-gradient(90deg,#3c3b3b,#454445 50%,#3a3939)"></div><div style="position:absolute;left:2px;top:415px;width:150px;height:36px;border-top:13px solid #2a2220;border-left:11px solid #2a2220;border-radius:26px 0 0 0"></div><div style="position:absolute;left:134.0px;top:415.0px;width:14.0px;height:45.0px;background:#2a2220;border-radius:0 6px 0 0"></div><div style="position:absolute;left:131.0px;top:414.0px;width:16px;height:12px;transform:rotate(0deg);transform-origin:0 0;background:#6a1a1c"></div><div style="position:absolute;left:150.7px;top:418.0px;width:14.3px;height:42.0px;background:linear-gradient(90deg,#6a1618,#a82a2c 50%,#701a1c)"></div><div style="position:absolute;left:139.0px;top:414.0px;width:22.0px;height:10.0px;background:#8a2224;border-radius:0 8px 0 0"></div><div style="position:absolute;left:171.0px;top:424.0px;width:17.4px;height:34.0px;background:linear-gradient(90deg,#8a7620,#c9a936 50%,#8a7420)"></div><div style="position:absolute;left:154.0px;top:414.0px;width:30.0px;height:14.0px;background:#b09530;border-radius:0 10px 0 0"></div><div style="position:absolute;left:188.4px;top:414.0px;width:12.0px;height:43.0px;background:linear-gradient(90deg,#1c2a70,#2c44a8 50%,#1c2a70)"></div><div style="position:absolute;left:109.0px;top:455.0px;width:104.0px;height:18.0px;background:linear-gradient(180deg,#4a4642,#36332f)"></div><div style="position:absolute;left:117.0px;top:454.0px;width:4px;height:19px;transform:rotate(-12deg);transform-origin:0 0;background:#5e5a54;opacity:.7"></div><div style="position:absolute;left:139.0px;top:454.0px;width:4px;height:19px;transform:rotate(-12deg);transform-origin:0 0;background:#5e5a54;opacity:.7"></div><div style="position:absolute;left:161.0px;top:454.0px;width:4px;height:19px;transform:rotate(-12deg);transform-origin:0 0;background:#5e5a54;opacity:.7"></div><div style="position:absolute;left:183.0px;top:454.0px;width:4px;height:19px;transform:rotate(-12deg);transform-origin:0 0;background:#5e5a54;opacity:.7"></div><div style="position:absolute;left:203.0px;top:454.0px;width:4px;height:19px;transform:rotate(-12deg);transform-origin:0 0;background:#5e5a54;opacity:.7"></div></div></div><div style="position:absolute;left:778.80px;top:521.00px;width:261.20px;height:46.00px;background:linear-gradient(180deg,#ffffff,#f5f7fa)"></div><div style="position:absolute;left:788.50px;top:534.70px;width:251.50px;height:26.10px;background:linear-gradient(180deg,#ffffff 0%,#f3f5f8 60%,#e9edf2 100%);border:1px solid #c8ced6;border-radius:13px"></div><svg style="position:absolute;left:808px;top:539px" width="22" height="18" viewBox="0 0 22 18"><circle cx="10" cy="7" r="5.2" fill="#fff" stroke="#1d4a8a" stroke-width="2.2"/><path d="M7.5 7h5M10 4.5v5" stroke="#1d4a8a" stroke-width="1.5"/><path d="M6.2 10.8L2 15" stroke="#1d4a8a" stroke-width="2.8" stroke-linecap="round"/><path d="M17 8l2.5 0-1.25 1.6z" fill="#333"/></svg><svg style="position:absolute;left:854px;top:538px" width="16" height="18" viewBox="0 0 16 18"><rect x="4.5" y="5.5" width="7" height="7" fill="#fff" stroke="#1d4a8a" stroke-width="1.8"/><path d="M8 1v3M8 14v3M1 9h3M12 9h3" stroke="#1d4a8a" stroke-width="1.6"/></svg><div style="position:absolute;left:884.50px;top:536.80px;width:50.50px;height:22.00px;background:linear-gradient(180deg,#fbfcfd 0%,#e4e8ee 55%,#cdd3db 100%);border:1px solid #9aa3ae;border-radius:11px 0 0 11px"></div><div style="position:absolute;left:947.00px;top:536.80px;width:50.00px;height:22.00px;background:linear-gradient(180deg,#fbfcfd 0%,#e4e8ee 55%,#cdd3db 100%);border:1px solid #9aa3ae;border-radius:0 11px 11px 0"></div><svg style="position:absolute;left:898px;top:541px" width="14" height="12" viewBox="0 0 14 12"><rect x="1" y="1" width="2.5" height="10" fill="#1b4f9c"/><path d="M12 1v10L4 6z" fill="#1b4f9c"/></svg><svg style="position:absolute;left:969px;top:541px" width="14" height="12" viewBox="0 0 14 12"><rect x="10.5" y="1" width="2.5" height="10" fill="#1b4f9c"/><path d="M2 1v10l8-5z" fill="#1b4f9c"/></svg><div style="position:absolute;left:923.50px;top:529.50px;width:35.00px;height:35.00px;border-radius:50%;background:radial-gradient(circle at 50% 25%,#a7c8f5 0%,#3f7be0 35%,#1246b5 60%,#0a2d86 85%,#2a6ad0 100%);border:2px solid #e8eef6;box-shadow:0 0 0 1px #8aa4c8,0 1px 3px rgba(0,0,0,0.3)"></div><div style="position:absolute;left:932.50px;top:539.50px;width:17.00px;height:14.50px;background:linear-gradient(180deg,#d8e6f2 0%,#a6c2d8 45%,#6f8f7a 65%,#9ab0a0 100%);border:1.2px solid #f4f7fa"></div><svg style="position:absolute;left:1005px;top:538px" width="16" height="18" viewBox="0 0 16 18"><path d="M4 6a6 6 0 108 0" fill="none" stroke="#1d4a8a" stroke-width="2.2"/><path d="M1.5 3.5L6 2l-.5 5z" fill="#1d4a8a"/></svg></body></html>
